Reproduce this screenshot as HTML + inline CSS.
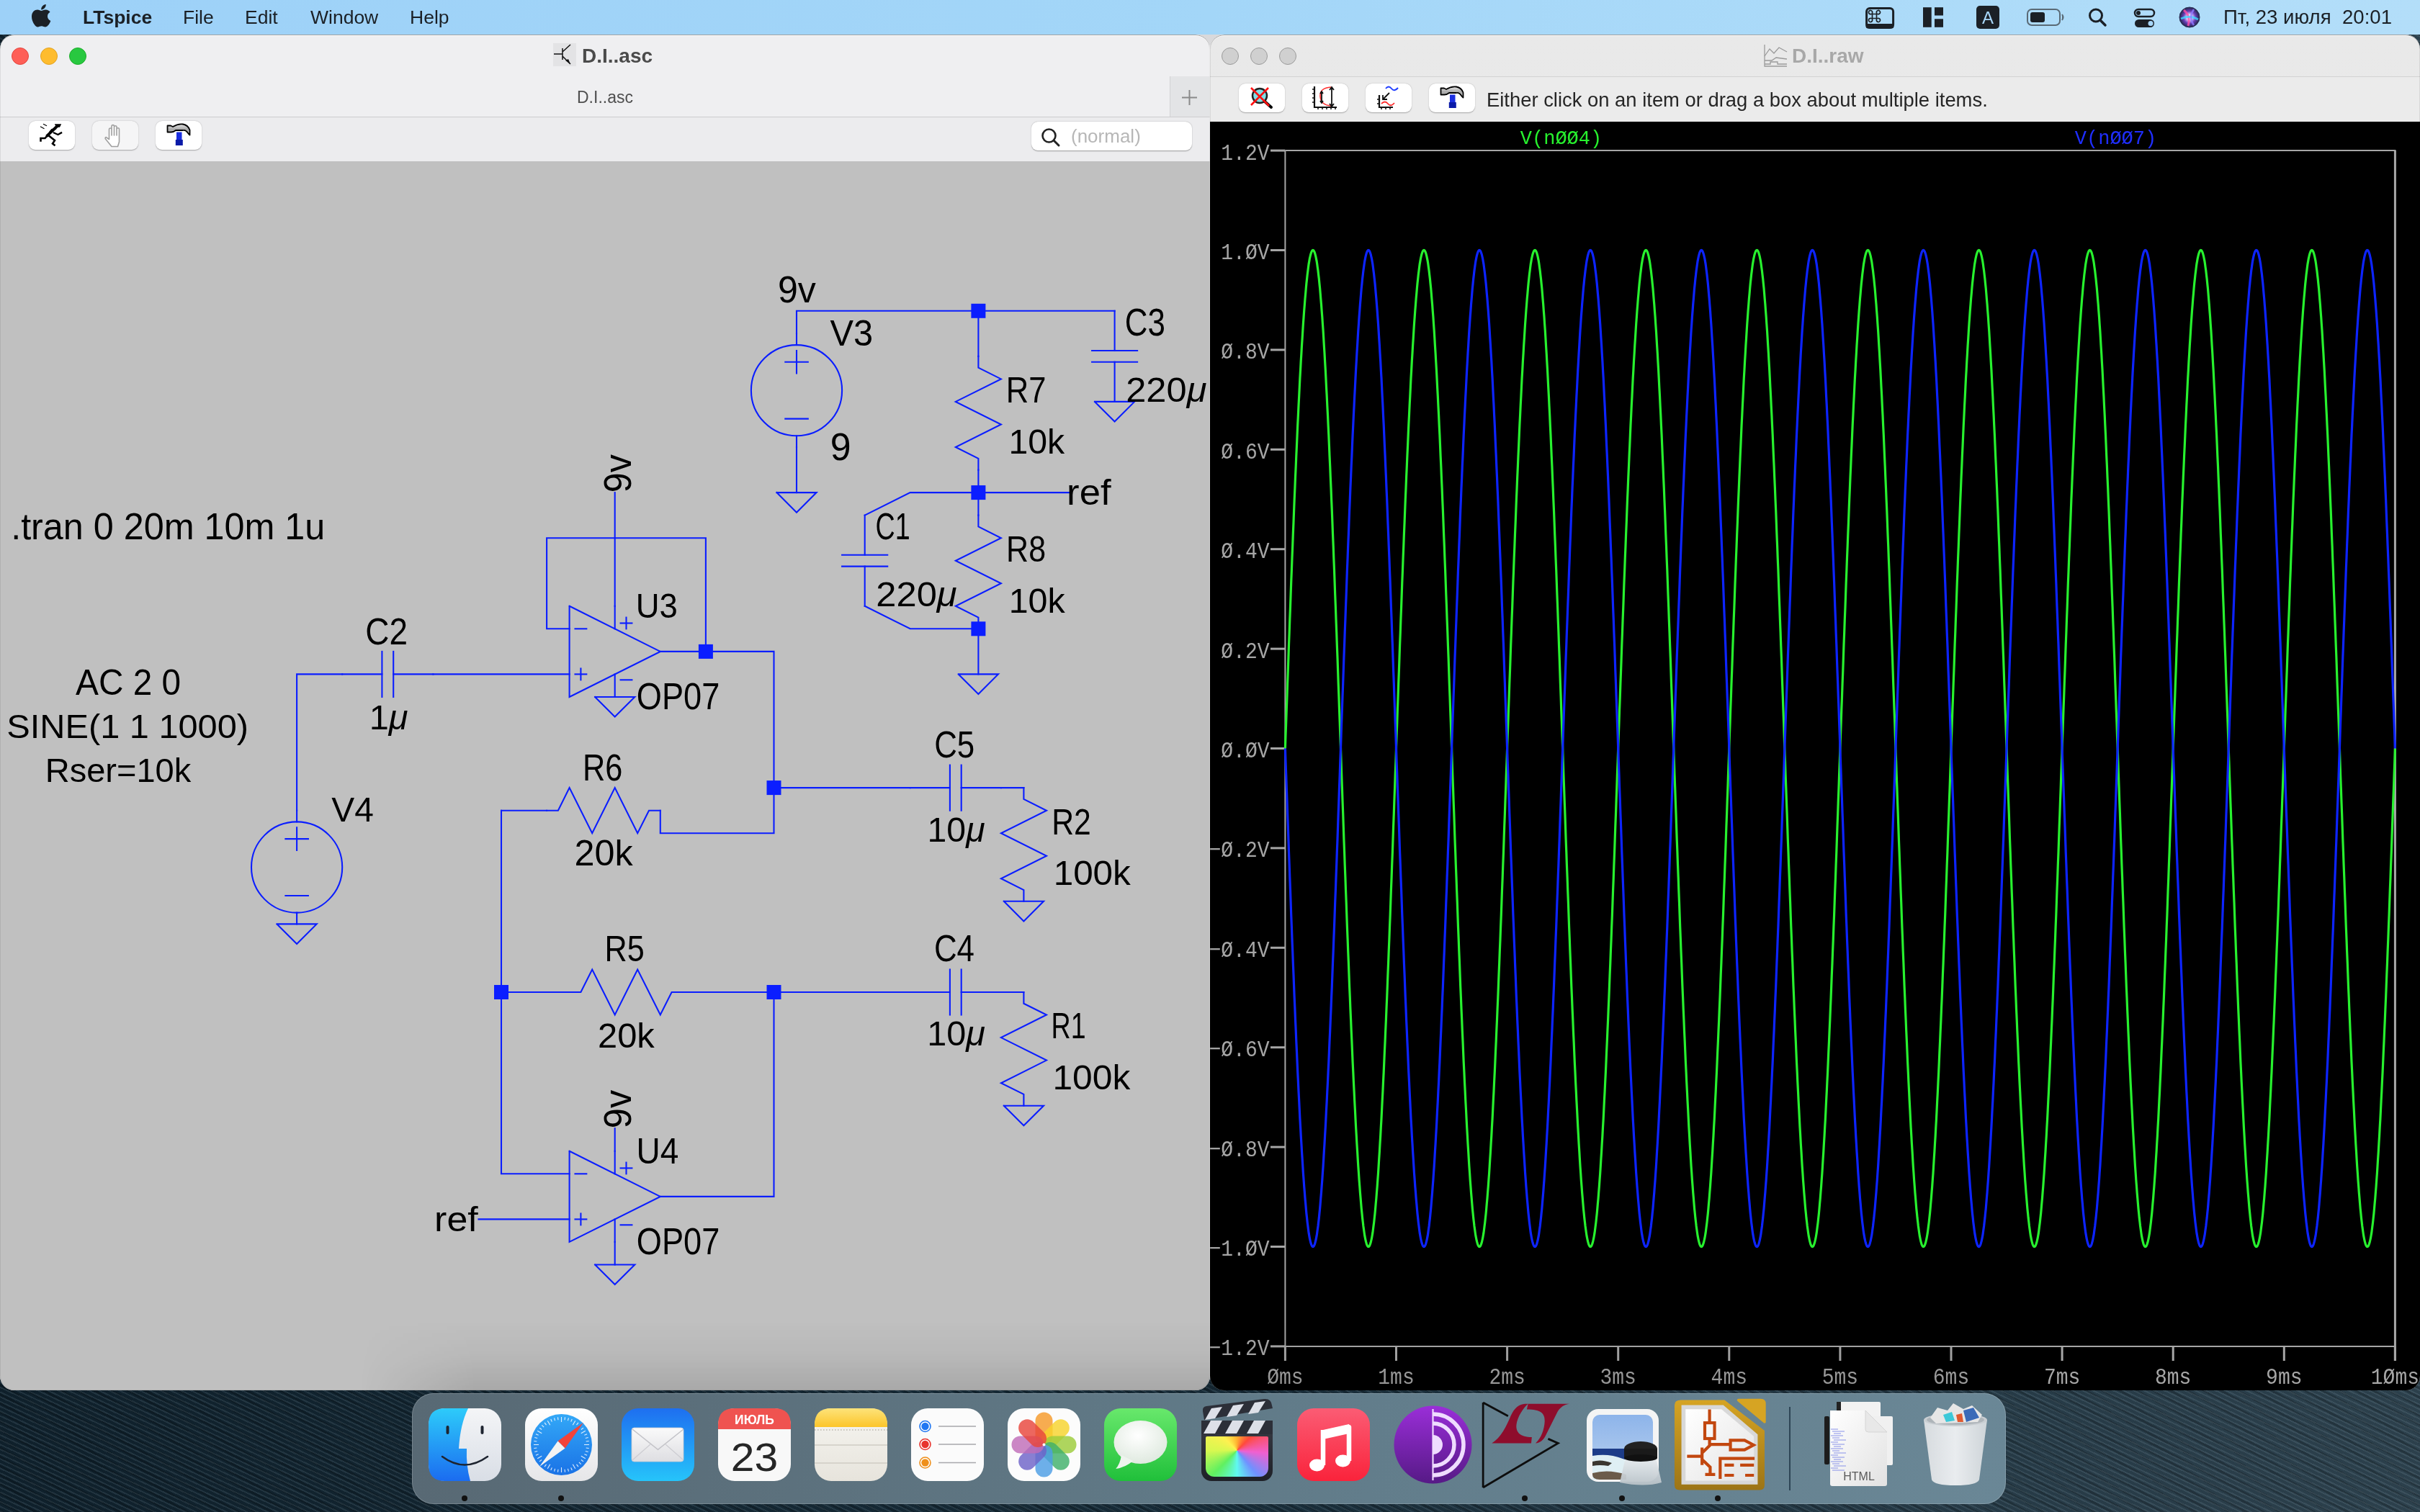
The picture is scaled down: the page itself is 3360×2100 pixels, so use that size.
<!DOCTYPE html>
<html><head><meta charset="utf-8"><style>
html,body{margin:0;padding:0;width:3360px;height:2100px;overflow:hidden;font-family:"Liberation Sans",sans-serif}
svg,#menubar,#lwin,#rwin{will-change:transform}
body{position:relative;background:#102330}
#desk{position:absolute;left:0;top:0;width:3360px;height:2100px;background:repeating-linear-gradient(25deg,rgba(190,220,235,0.1) 0 2px,rgba(0,0,0,0) 2px 6px),repeating-linear-gradient(28deg,rgba(0,0,0,0.18) 0 3px,rgba(0,0,0,0) 3px 11px),linear-gradient(90deg,#0f202b 0%,#172b37 50%,#273b47 85%,#2c404c 100%)}
#menubar{position:absolute;left:0;top:0;width:3360px;height:48px;background:linear-gradient(90deg,#9dd1f8 0%,#a3d6f8 50%,#b3def9 100%)}
#menubar span{position:absolute;top:9px;font-size:26.5px;color:#1b2026;white-space:nowrap}
#lwin{position:absolute;left:0;top:48px;width:1680px;height:1883px;background:#efeff1;border-radius:20px;overflow:hidden}
#lwin::after,#rwin::after{content:'';position:absolute;left:0;top:0;right:0;bottom:0;border-radius:20px;box-shadow:inset 0 1px 0 rgba(0,0,0,0.3),inset 0 0 0 1px rgba(0,0,0,0.08),inset 0 2px 0 rgba(255,255,255,0.7);pointer-events:none}
#rwin{position:absolute;left:1680px;top:48px;width:1680px;height:1883px;background:linear-gradient(#e9e9e9,#e4e4e4);border-radius:20px;overflow:hidden}
.tl{position:absolute;top:18px;width:22px;height:22px;border-radius:50%;border:1px solid}
.tbtn{position:absolute;border-radius:9px;box-shadow:0 0.5px 1.5px rgba(0,0,0,0.3);overflow:hidden}
.tbtn svg{display:block}
#canvas{position:absolute;left:0;top:176px;width:1680px;height:1707px;background:#c0c0c0}
#plotbg{position:absolute;left:0;top:121px;width:1680px;height:1762px;background:#000}
#dock{position:absolute;left:572px;top:1935px;width:2213px;height:154px;border-radius:30px;background:linear-gradient(90deg,#586974,#627d8b 60%,#6a8796);box-shadow:inset 0 0 0 1px rgba(255,255,255,0.18)}
.di{position:absolute;top:21px;width:101px;height:101px}
.dot{position:absolute;top:142px;width:8px;height:8px;border-radius:50%;background:#111}
</style></head><body>
<div id="desk"></div><div style="position:absolute;left:1600px;top:48px;width:160px;height:80px;background:#d9d9db"></div>

<div id="menubar">
  <svg style="position:absolute;left:0;top:0" width="3360" height="48">
    <g fill="#1b2026" transform="translate(43.7 3.8) scale(0.07)"><path d="M318.7 268.7c-.2-36.7 16.4-64.4 50-84.8-18.8-26.9-47.2-41.7-84.7-44.6-35.5-2.8-74.3 20.7-88.5 20.7-15 0-49.4-19.7-76.4-19.7C63.3 141.2 4 184.8 4 273.5q0 39.3 14.4 81.2c12.8 36.7 59 126.7 107.2 125.2 25.2-.6 43-17.9 75.8-17.9 31.8 0 48.3 17.9 76.4 17.9 48.6-.7 90.4-82.5 102.6-119.3-65.2-30.7-61.7-90-61.7-91.900zm-56.6-164.2c27.3-32.4 24.8-61.9 24-72.5-24.1 1.4-52 16.4-67.9 34.9-17.5 19.8-27.8 44.3-25.6 71.9 26.1 2 49.9-11.4 69.5-34.3z"/></g>
  </svg>
  <span style="left:115px;font-weight:bold">LTspice</span>
  <span style="left:254px">File</span>
  <span style="left:340px">Edit</span>
  <span style="left:431px">Window</span>
  <span style="left:569px">Help</span>
  <svg style="position:absolute;left:2580;top:0;left:2580px" width="780" height="48">
    <!-- cmd keyboard -->
    <rect x="11.6" y="11.6" width="37" height="27" rx="4.5" fill="none" stroke="#1b2026" stroke-width="3"/>
    <rect x="10.5" y="33" width="39" height="6.5" rx="3" fill="#1b2026"/>
    <g fill="none" stroke="#1b2026" stroke-width="1.7"><path d="M19.5 19.5 H25.5 V25.5 H19.5 Z M19.5 19.5 V18 A2.6 2.6 0 1 0 18 19.5 H19.5 M25.5 19.5 V18 A2.6 2.6 0 1 1 27 19.5 H25.5 M19.5 25.5 V27 A2.6 2.6 0 1 1 18 25.5 H19.5 M25.5 25.5 V27 A2.6 2.6 0 1 0 27 25.5 H25.5"/></g>
    <!-- grid -->
    <rect x="90" y="10.2" width="11.7" height="27.6" fill="#1b2026"/>
    <rect x="106" y="10.2" width="12" height="11.3" fill="#1b2026"/>
    <rect x="106" y="26.3" width="12" height="11.5" fill="#1b2026"/>
    <!-- A -->
    <rect x="164" y="8" width="32" height="32" rx="5" fill="#1b2026"/>
    <text x="180" y="33" text-anchor="middle" font-family="Liberation Sans" font-size="24" fill="#a7d6f8">A</text>
    <!-- battery -->
    <rect x="235" y="13" width="45" height="22" rx="6" fill="none" stroke="#5a6a76" stroke-width="2"/>
    <rect x="239" y="17" width="20" height="14" rx="3" fill="#1b2026"/>
    <path d="M283 20 q3 4 0 8" fill="#5a6a76" stroke="#5a6a76" stroke-width="2"/>
    <!-- search -->
    <circle cx="330" cy="21.5" r="8.5" fill="none" stroke="#1b2026" stroke-width="3"/>
    <path d="M336 28 L343 35" stroke="#1b2026" stroke-width="3.5" stroke-linecap="round"/>
    <!-- control center -->
    <rect x="384" y="13" width="27" height="10" rx="5" fill="none" stroke="#1b2026" stroke-width="2.5"/>
    <circle cx="389" cy="18" r="3" fill="#1b2026"/>
    <rect x="384" y="27" width="27" height="11" rx="5.5" fill="#1b2026"/>
    <circle cx="406" cy="32.5" r="3.5" fill="#a7d6f8"/>
    <!-- siri -->
    <defs><radialGradient id="siri" cx="50%" cy="50%" r="50%"><stop offset="0" stop-color="#ffffff"/><stop offset="0.25" stop-color="#e9d9ff"/><stop offset="0.6" stop-color="#6a3fb8"/><stop offset="1" stop-color="#20264a"/></radialGradient></defs>
    <circle cx="460" cy="24" r="14" fill="url(#siri)"/>
    <path d="M452 14 Q462 22 458 36" stroke="#ff4fa8" stroke-width="3" fill="none" opacity="0.8"/><path d="M448 26 Q460 20 472 27" stroke="#3fd8ff" stroke-width="3" fill="none" opacity="0.8"/><path d="M466 13 Q458 24 466 35" stroke="#8f7bff" stroke-width="2.5" fill="none" opacity="0.8"/>
    <circle cx="460" cy="24" r="14" fill="none" stroke="#2a2f55" stroke-width="1"/>
  </svg>
  <span style="left:3087px;font-size:27.6px;top:8px">&#1055;&#1090;, 23 &#1080;&#1102;&#1083;&#1103;&nbsp; 20:01</span>
</div>

<div id="lwin">
  <div class="tl" style="left:16px;background:#fe5f57;border-color:#e2463f"></div>
  <div class="tl" style="left:56px;background:#febc2e;border-color:#e1a223"></div>
  <div class="tl" style="left:96px;background:#28c840;border-color:#1dad2b"></div>
  <div style="position:absolute;left:768px;top:12px;width:32px;height:32px;background:#e3e3e5"></div>
  <svg style="position:absolute;left:768px;top:12px" width="32" height="32"><path d="M1 15 H13 M13 7 V23 M13 12 L24 2 M13 18 L24 29" stroke="#111" stroke-width="1.5" fill="none"/><path d="M24 29 L17 24 L21 22 Z" fill="#111"/></svg>
  <div style="position:absolute;left:808px;top:14px;font:bold 28px 'Liberation Sans', sans-serif;color:#4b4b4b">D.I..asc</div>
  <div style="position:absolute;left:801px;top:74px;font:23px 'Liberation Sans', sans-serif;color:#4f4f4f">D.I..asc</div>
  <div style="position:absolute;left:1624px;top:58px;width:56px;height:56px;background:#e3e4e6;border-left:1px solid #d2d2d4"></div>
  <svg style="position:absolute;left:1624px;top:58px" width="56" height="56"><path d="M17 29.5 H38 M27.5 19 V40" stroke="#8a8a8a" stroke-width="2"/></svg>
  <div style="position:absolute;left:0;top:114px;width:1680px;height:1px;background:#cdcdcf"></div>
  <div style="position:absolute;left:0;top:115px;width:1680px;height:61px;background:#ececee"></div>
  <div class="tbtn" style="left:40px;top:120px;width:64px;height:40px;background:#ffffff"><svg width="64" height="40" viewBox="0 0 64 40"><g fill="none" stroke="#000" stroke-linecap="square" stroke-linejoin="miter">
<path d="M37 5 H44 L42.5 8 H38.5 Z" fill="#000" stroke-width="1.5"/>
<path d="M38.5 8 L26 20" stroke-width="4"/>
<path d="M37 11 L32 12 L29.5 15" stroke-width="2.2"/>
<path d="M35 16.5 L40.5 19 L45 16.5" stroke-width="2.4"/>
<path d="M26 20 L22.5 24 H16.5 V27.5" stroke-width="2.6"/>
<path d="M28.5 21 L36 27 L33 31.5 L35.5 33.5" stroke-width="2.6"/>
<path d="M16.5 8 L21 10.5 M20.5 4.5 L24.5 6.5" stroke-width="1.2"/>
</g></svg></div><div class="tbtn" style="left:128px;top:120px;width:64px;height:40px;background:#f5f5f6"><svg width="64" height="40" viewBox="0 0 64 40"><path d="M27 35.5 L18.5 25 Q17.5 23.3 19.3 22.6 L23.5 25.5 V12 Q23.5 10 25.3 10 Q27 10 27 12 V20 V7.5 Q27 5.6 28.8 5.6 Q30.5 5.6 30.5 7.5 V20 V8.5 Q30.5 6.7 32.3 6.7 Q34 6.7 34 8.5 V20 V11.5 Q34 9.8 35.8 9.8 Q37.5 9.8 37.5 11.5 V29 L35.5 35.5 Z" fill="#fff" stroke="#a0a0a0" stroke-width="1.6" stroke-linejoin="round"/></svg></div><div class="tbtn" style="left:216px;top:120px;width:64px;height:40px;background:#ffffff"><svg width="64" height="40" viewBox="0 0 64 40"><defs><linearGradient id="hmh" x1="0" y1="0" x2="0" y2="1"><stop offset="0" stop-color="#e6e6e6"/><stop offset="0.5" stop-color="#a8a8a8"/><stop offset="1" stop-color="#d0d0d0"/></linearGradient></defs>
<path d="M16.5 6.5 H21 L24 8 Q31 3.5 38 4.5 Q45 5.8 47.5 12.5 V19.5 L45.5 17.5 Q42 12 38 13 H28 Q25 15.5 21.5 15.5 H16.5 Z" fill="url(#hmh)" stroke="#000" stroke-width="1.8" stroke-linejoin="round"/>
<rect x="29" y="15.5" width="7.5" height="11" fill="#1b2fe0"/><rect x="27.8" y="26" width="10" height="8" fill="#0a1aa8"/></svg></div>
  <div style="position:absolute;left:1432px;top:121px;width:223px;height:40px;background:#fff;border-radius:9px;box-shadow:0 0.5px 1.5px rgba(0,0,0,0.35)"></div>
  <svg style="position:absolute;left:1440px;top:126px" width="40" height="32"><circle cx="16.5" cy="14.5" r="9" fill="none" stroke="#222" stroke-width="2.6"/><path d="M23 21 L30 28" stroke="#222" stroke-width="3" stroke-linecap="round"/></svg>
  <div style="position:absolute;left:1487px;top:126px;font:26px 'Liberation Sans', sans-serif;color:#b7b7b7">(normal)</div>
  <div style="position:absolute;right:0;top:0;bottom:0;width:1px;background:rgba(255,255,255,0.4);z-index:5"></div>
  <div id="canvas">
    <svg width="1680" height="1707" style="position:absolute;left:0;top:0">
      <g transform="translate(0,-224)">
      <g fill="none" stroke="#0b1eff" stroke-width="2.1" stroke-linejoin="miter" stroke-linecap="square">
<path d="M1090.3 502.7 L1121.8 502.7"/>
<path d="M1106 487 L1106 518.5"/>
<path d="M1090.3 581.6 L1121.8 581.6"/>
<path d="M1106 463.3 L1106 479.1"/>
<path d="M1106 605.3 L1106 621"/>
<path d="M1106 463.3 L1106 431.8 L1547.6 431.8"/>
<path d="M1358.4 431.8 L1358.4 494.9"/>
<path d="M1358.4 494.9 L1358.4 510.6 L1389.9 526.4 L1326.8 557.9 L1389.9 589.5 L1326.8 621 L1358.4 636.8 L1358.4 652.6"/>
<path d="M1358.4 652.6 L1358.4 715.6"/>
<path d="M1358.4 684.1 L1484.5 684.1"/>
<path d="M1358.4 715.6 L1358.4 731.4 L1389.9 747.2 L1326.8 778.7 L1389.9 810.3 L1326.8 841.8 L1358.4 857.6 L1358.4 873.3"/>
<path d="M1358.4 873.3 L1358.4 936.4"/>
<path d="M1330.8 936.4 L1386 936.4 L1358.4 964 L1330.8 936.4"/>
<path d="M1547.6 431.8 L1547.6 487"/>
<path d="M1547.6 502.7 L1547.6 557.9"/>
<path d="M1516.1 487 L1579.1 487"/>
<path d="M1516.1 502.7 L1579.1 502.7"/>
<path d="M1520 557.9 L1575.2 557.9 L1547.6 585.5 L1520 557.9"/>
<path d="M1106 621 L1106 684.1"/>
<path d="M1078.4 684.1 L1133.6 684.1 L1106 711.7 L1078.4 684.1"/>
<path d="M1200.7 715.6 L1200.7 770.8"/>
<path d="M1200.7 786.6 L1200.7 841.8"/>
<path d="M1169.1 770.8 L1232.2 770.8"/>
<path d="M1169.1 786.6 L1232.2 786.6"/>
<path d="M1200.7 715.6 L1263.7 684.1 L1358.4 684.1"/>
<path d="M1200.7 841.8 L1263.7 873.3 L1358.4 873.3"/>
<path d="M790.6 841.8 L916.8 904.9 L790.6 968 L790.6 841.8"/>
<path d="M798.5 873.3 L814.3 873.3"/>
<path d="M798.5 936.4 L814.3 936.4"/>
<path d="M806.4 928.5 L806.4 944.3"/>
<path d="M853.7 841.8 L853.7 873.3"/>
<path d="M853.7 968 L853.7 936.4"/>
<path d="M861.6 865.5 L877.4 865.5"/>
<path d="M869.5 857.6 L869.5 873.3"/>
<path d="M861.6 944.3 L877.4 944.3"/>
<path d="M853.7 684.1 L853.7 841.8"/>
<path d="M790.6 873.3 L759.1 873.3 L759.1 747.2 L979.9 747.2 L979.9 904.9"/>
<path d="M916.8 904.9 L1074.5 904.9 L1074.5 1094.1"/>
<path d="M826.1 968 L881.3 968 L853.7 995.6 L826.1 968"/>
<path d="M396.4 1165.1 L427.9 1165.1"/>
<path d="M412.1 1149.3 L412.1 1180.9"/>
<path d="M396.4 1244 L427.9 1244"/>
<path d="M412.1 1125.7 L412.1 1141.4"/>
<path d="M412.1 1267.6 L412.1 1283.4"/>
<path d="M384.5 1283.4 L439.7 1283.4 L412.1 1311 L384.5 1283.4"/>
<path d="M412.1 1125.7 L412.1 936.4 L475.2 936.4"/>
<path d="M601.4 936.4 L546.2 936.4"/>
<path d="M530.4 936.4 L475.2 936.4"/>
<path d="M546.2 904.9 L546.2 968"/>
<path d="M530.4 904.9 L530.4 968"/>
<path d="M601.4 936.4 L790.6 936.4"/>
<path d="M759.1 1125.7 L774.9 1125.7 L790.6 1094.1 L822.2 1157.2 L853.7 1094.1 L885.2 1157.2 L901 1125.7 L916.8 1125.7"/>
<path d="M696 1125.7 L759.1 1125.7"/>
<path d="M916.8 1125.7 L916.8 1157.2 L1074.5 1157.2 L1074.5 1094.1"/>
<path d="M1074.5 1094.1 L1263.7 1094.1"/>
<path d="M1389.9 1094.1 L1334.7 1094.1"/>
<path d="M1318.9 1094.1 L1263.7 1094.1"/>
<path d="M1334.7 1062.6 L1334.7 1125.7"/>
<path d="M1318.9 1062.6 L1318.9 1125.7"/>
<path d="M1389.9 1094.1 L1421.4 1094.1"/>
<path d="M1421.4 1094.1 L1421.4 1109.9 L1453 1125.7 L1389.9 1157.2 L1453 1188.8 L1389.9 1220.3 L1421.4 1236.1 L1421.4 1251.8"/>
<path d="M1393.8 1251.8 L1449 1251.8 L1421.4 1279.4 L1393.8 1251.8"/>
<path d="M696 1125.7 L696 1630.3 L790.6 1630.3"/>
<path d="M790.6 1378 L806.4 1378 L822.2 1346.5 L853.7 1409.5 L885.2 1346.5 L916.8 1409.5 L932.6 1378 L948.3 1378"/>
<path d="M696 1378 L790.6 1378"/>
<path d="M948.3 1378 L1074.5 1378"/>
<path d="M1074.5 1378 L1263.7 1378"/>
<path d="M1389.9 1378 L1334.7 1378"/>
<path d="M1318.9 1378 L1263.7 1378"/>
<path d="M1334.7 1346.5 L1334.7 1409.5"/>
<path d="M1318.9 1346.5 L1318.9 1409.5"/>
<path d="M1389.9 1378 L1421.4 1378"/>
<path d="M1421.4 1378 L1421.4 1393.8 L1453 1409.5 L1389.9 1441.1 L1453 1472.6 L1389.9 1504.2 L1421.4 1519.9 L1421.4 1535.7"/>
<path d="M1393.8 1535.7 L1449 1535.7 L1421.4 1563.3 L1393.8 1535.7"/>
<path d="M1074.5 1378 L1074.5 1661.9 L916.8 1661.9"/>
<path d="M790.6 1598.8 L916.8 1661.9 L790.6 1724.9 L790.6 1598.8"/>
<path d="M798.5 1630.3 L814.3 1630.3"/>
<path d="M798.5 1693.4 L814.3 1693.4"/>
<path d="M806.4 1685.5 L806.4 1701.3"/>
<path d="M853.7 1598.8 L853.7 1630.3"/>
<path d="M853.7 1724.9 L853.7 1693.4"/>
<path d="M861.6 1622.4 L877.4 1622.4"/>
<path d="M869.5 1614.6 L869.5 1630.3"/>
<path d="M861.6 1701.3 L877.4 1701.3"/>
<path d="M853.7 1567.2 L853.7 1598.8"/>
<path d="M853.7 1724.9 L853.7 1756.5"/>
<path d="M826.1 1756.5 L881.3 1756.5 L853.7 1784.1 L826.1 1756.5"/>
<path d="M664.5 1693.4 L790.6 1693.4"/>
<circle cx="1106" cy="542.2" r="63.1"/>
<circle cx="412.1" cy="1204.5" r="63.1"/>
</g><g fill="#0b1eff">
<rect x="1348.4" y="421.8" width="20" height="20"/>
<rect x="1348.4" y="674.1" width="20" height="20"/>
<rect x="1348.4" y="863.3" width="20" height="20"/>
<rect x="969.9" y="894.9" width="20" height="20"/>
<rect x="1064.5" y="1084.1" width="20" height="20"/>
<rect x="686" y="1368" width="20" height="20"/>
<rect x="1064.5" y="1368" width="20" height="20"/>
</g>
      <g font-family="Liberation Sans, sans-serif" font-size="49" fill="#000">
      <g transform="matrix(0.99474 0 0 1.03030 5.37 -14.45)"><text x="1153.3" y="480.2" text-anchor="start">V3</text></g>
<g transform="matrix(1.05909 0 0 1.08485 -68.61 -53.13)"><text x="1153.3" y="637.9" text-anchor="start">9</text></g>
<g transform="matrix(1.02245 0 0 1.04242 -25.41 -17.92)"><text x="1107" y="419.8" text-anchor="middle">9v</text></g>
<g transform="matrix(0.88929 0 0 1.02424 153.72 -13.15)"><text x="1397.8" y="559" text-anchor="start">R7</text></g>
<g transform="matrix(0.98400 0 0 0.98571 25.02 8.80)"><text x="1397.8" y="630" text-anchor="start">10k</text></g>
<g transform="matrix(0.87679 0 0 1.03636 171.55 -27.76)"><text x="1397.8" y="779.8" text-anchor="start">R8</text></g>
<g transform="matrix(0.98800 0 0 0.97714 19.61 19.55)"><text x="1397.8" y="850.8" text-anchor="start">10k</text></g>
<g transform="matrix(0.89655 0 0 1.09091 160.10 -40.68)"><text x="1563.4" y="464.4" text-anchor="start">C3</text></g>
<g transform="matrix(1.03333 0 0 0.99524 -52.30 1.40)"><text x="1563.4" y="559" text-anchor="start">220<tspan font-style="italic">μ</tspan></text></g>
<g transform="matrix(0.76897 0 0 1.06667 280.23 -48.97)"><text x="1216.4" y="748.3" text-anchor="start">C1</text></g>
<g transform="matrix(1.03429 0 0 0.99762 -41.79 0.83)"><text x="1216.4" y="842.9" text-anchor="start">220<tspan font-style="italic">μ</tspan></text></g>
<g transform="matrix(1.07407 0 0 1.02000 -113.32 -13.72)"><text x="1484.5" y="701" text-anchor="start">ref</text></g>
<g transform="matrix(0.92807 0 0 0.98485 61.15 12.02)"><text x="885.2" y="858.7" text-anchor="start">U3</text></g>
<g transform="matrix(0.92167 0 0 1.03939 67.96 -38.60)"><text x="885.2" y="984.8" text-anchor="start">OP07</text></g>
<g transform="matrix(0.93860 0 0 1.03636 52.69 -58.36)"><text x="885.2" y="1615.6" text-anchor="start">U4</text></g>
<g transform="matrix(0.92167 0 0 1.03939 67.96 -68.42)"><text x="885.2" y="1741.8" text-anchor="start">OP07</text></g>
<g transform="matrix(1.06111 0 0 0.97714 -41.34 38.69)"><text x="664.5" y="1710.3" text-anchor="end">ref</text></g>
<g transform="matrix(0.87143 0 0 1.03333 187.06 -38.20)"><text x="1460.9" y="1158.3" text-anchor="start">R2</text></g>
<g transform="matrix(1.00882 0 0 0.97429 -11.13 31.60)"><text x="1460.9" y="1229.3" text-anchor="start">100k</text></g>
<g transform="matrix(0.76786 0 0 1.02121 337.79 -30.39)"><text x="1460.9" y="1442.2" text-anchor="start">R1</text></g>
<g transform="matrix(1.01471 0 0 0.97429 -20.94 38.91)"><text x="1460.9" y="1513.1" text-anchor="start">100k</text></g>
<g transform="matrix(0.97759 0 0 0.96970 11.11 33.14)"><text x="459.4" y="1142.5" text-anchor="start">V4</text></g>
<g transform="matrix(0.93684 0 0 1.06667 32.31 -58.90)"><text x="538.3" y="894.1" text-anchor="middle">C2</text></g>
<g transform="matrix(0.99388 0 0 0.98810 4.55 12.15)"><text x="538.3" y="1012.4" text-anchor="middle">1<tspan font-style="italic">μ</tspan></text></g>
<g transform="matrix(0.89483 0 0 1.06061 137.91 -63.66)"><text x="1326.8" y="1051.8" text-anchor="middle">C5</text></g>
<g transform="matrix(0.98312 0 0 0.98333 23.18 18.15)"><text x="1326.8" y="1170.1" text-anchor="middle">10<tspan font-style="italic">μ</tspan></text></g>
<g transform="matrix(0.89492 0 0 1.03939 137.60 -52.83)"><text x="1326.8" y="1335.7" text-anchor="middle">C4</text></g>
<g transform="matrix(0.99221 0 0 0.97619 11.15 33.13)"><text x="1326.8" y="1454" text-anchor="middle">10<tspan font-style="italic">μ</tspan></text></g>
<g transform="matrix(0.88393 0 0 1.06364 95.93 -68.32)"><text x="837.9" y="1083.4" text-anchor="middle">R6</text></g>
<g transform="matrix(1.02763 0 0 1.02000 -23.03 -23.44)"><text x="837.9" y="1201.7" text-anchor="middle">20k</text></g>
<g transform="matrix(0.88070 0 0 1.02121 101.35 -28.64)"><text x="869.5" y="1335.7" text-anchor="middle">R5</text></g>
<g transform="matrix(0.99740 0 0 0.99143 2.16 13.16)"><text x="869.5" y="1454" text-anchor="middle">20k</text></g>
<g transform="matrix(1.08182 0 0 1.02449 -71.57 -14.65)"><text x="853.7" y="704.4" transform="rotate(-90 853.7 682.1)">9v</text></g>
<g transform="matrix(1.10606 0 0 1.03061 -92.41 -45.95)"><text x="853.7" y="1587.5" transform="rotate(-90 853.7 1565.2)">9v</text></g>
<g transform="matrix(0.97568 0 0 1.02121 5.38 -20.99)"><text x="177" y="965.5" text-anchor="middle">AC 2 0</text></g>
<g transform="matrix(0.99458 0 0 0.93111 1.06 69.27)"><text x="177" y="1026.3" text-anchor="middle">SINE(1 1 1000)</text></g>
<g transform="matrix(0.96019 0 0 0.93429 4.59 70.93)"><text x="166" y="1086.5" text-anchor="middle">Rser=10k</text></g>
<g transform="matrix(1.02662 0 0 1.05152 -0.73 -38.13)"><text x="15.5" y="748.4">.tran 0 20m 10m 1u</text></g>
      </g>
      </g>
    </svg>
  </div>
</div>

<div id="rwin">
  <div class="tl" style="left:16px;background:#d0d0d0;border-color:#9a9a9a"></div>
  <div class="tl" style="left:56px;background:#d0d0d0;border-color:#9a9a9a"></div>
  <div class="tl" style="left:96px;background:#d0d0d0;border-color:#9a9a9a"></div>
  <svg style="position:absolute;left:768px;top:12px" width="34" height="34"><g stroke="#9a9a9a" stroke-width="1.3" fill="none"><path d="M2 2 V32 H33"/><path d="M2 18 L9 8 L15 14 L22 6 L33 12"/><path d="M2 24 H12 L18 20 L33 22"/><path d="M2 29 H10 V26 H20 V29 H33"/></g></svg>
  <div style="position:absolute;left:808px;top:14px;font:bold 28px 'Liberation Sans', sans-serif;color:#a8a8a8">D.I..raw</div>
  <div style="position:absolute;left:0;top:58px;width:1680px;height:1px;background:#d2d2d2"></div>
  <div style="position:absolute;left:0;top:59px;width:1680px;height:62px;background:#ebebeb"></div>
  <div class="tbtn" style="left:40px;top:68px;width:64px;height:40px;background:#ffffff"><svg width="64" height="40" viewBox="0 0 64 40"><circle cx="29" cy="17" r="10" fill="#7fe0e8" stroke="#222" stroke-width="2.5"/><path d="M36 25 L45 33" stroke="#000" stroke-width="4" stroke-linecap="round"/><path d="M17 6 L42 31 M41 6 L17 30" stroke="#ff1010" stroke-width="2.6"/></svg></div><div class="tbtn" style="left:128px;top:68px;width:64px;height:40px;background:#ffffff"><svg width="64" height="40" viewBox="0 0 64 40"><path d="M17 4 V33 H48" stroke="#111" stroke-width="2.2" fill="none"/><path d="M14 8h3M14 14h3M14 20h3M14 26h3M22 33v3M28 33v3M34 33v3M40 33v3M46 33v3" stroke="#111" stroke-width="1.5"/><path d="M40 5 Q24 6 25 18 Q26 30 40 31" stroke="#ff3030" stroke-width="1.6" fill="none"/><path d="M41 6 V31 M38 9 L41 5 L44 9 M38 28 L41 32 L44 28 M27 12 V26 M25 14 L27 11 L29 14 M25 24 L27 27 L29 24" stroke="#111" stroke-width="1.8" fill="none"/></svg></div><div class="tbtn" style="left:216px;top:68px;width:64px;height:40px;background:#ffffff"><svg width="64" height="40" viewBox="0 0 64 40"><path d="M19 16 V33 H38" stroke="#111" stroke-width="2.2" fill="none"/><path d="M22 33v3M28 33v3M34 33v3M16 22h3M16 28h3" stroke="#111" stroke-width="1.5"/><path d="M22 28 Q27 23 31 28 T40 27" stroke="#ff2a2a" stroke-width="1.8" fill="none"/><path d="M28 7 Q32 2 36 7 T45 6" stroke="#1e3cff" stroke-width="2" fill="none"/><path d="M33 13 L24 22 M24 16 V22 H30" stroke="#111" stroke-width="1.8" fill="none"/></svg></div><div class="tbtn" style="left:304px;top:68px;width:64px;height:40px;background:#ffffff"><svg width="64" height="40" viewBox="0 0 64 40"><defs><linearGradient id="hmh" x1="0" y1="0" x2="0" y2="1"><stop offset="0" stop-color="#e6e6e6"/><stop offset="0.5" stop-color="#a8a8a8"/><stop offset="1" stop-color="#d0d0d0"/></linearGradient></defs>
<path d="M16.5 6.5 H21 L24 8 Q31 3.5 38 4.5 Q45 5.8 47.5 12.5 V19.5 L45.5 17.5 Q42 12 38 13 H28 Q25 15.5 21.5 15.5 H16.5 Z" fill="url(#hmh)" stroke="#000" stroke-width="1.8" stroke-linejoin="round"/>
<rect x="29" y="15.5" width="7.5" height="11" fill="#1b2fe0"/><rect x="27.8" y="26" width="10" height="8" fill="#0a1aa8"/></svg></div>
  <div style="position:absolute;left:2064px;top:73px;font:27.4px 'Liberation Sans', sans-serif;color:#262626;left:384px;top:75px">Either click on an item or drag a box about multiple items.</div>
  <div id="plotbg"></div>
</div>
<svg style="position:absolute;left:0;top:0" width="3360" height="1931">
<g stroke="#a6a6a6" stroke-width="3" fill="none">
<path stroke-width="2" d="M1784.4 209 H3325.4 V1870 H1784.4 M1784.4 209 V1870"/>
<path d="M1784.4 1870 V1890 M3325.4 209 V1890"/>
<path d="M1764 209.1 H1784.4"/>
<path d="M1764 347.5 H1784.4"/>
<path d="M1764 485.9 H1784.4"/>
<path d="M1764 624.3 H1784.4"/>
<path d="M1764 762.7 H1784.4"/>
<path d="M1764 901.1 H1784.4"/>
<path d="M1764 1039.5 H1784.4"/>
<path d="M1764 1177.9 H1784.4"/>
<path d="M1764 1316.3 H1784.4"/>
<path d="M1764 1454.7 H1784.4"/>
<path d="M1764 1593.1 H1784.4"/>
<path d="M1764 1731.5 H1784.4"/>
<path d="M1764 1869.9 H1784.4"/>
<path d="M1938.5 1870 V1890"/>
<path d="M2092.6 1870 V1890"/>
<path d="M2246.7 1870 V1890"/>
<path d="M2400.8 1870 V1890"/>
<path d="M2554.9 1870 V1890"/>
<path d="M2709 1870 V1890"/>
<path d="M2863.1 1870 V1890"/>
<path d="M3017.2 1870 V1890"/>
<path d="M3171.3 1870 V1890"/>
<path d="M3325.4 1870 V1890"/>
</g>
<g font-family="Liberation Mono, monospace" font-size="28" fill="#a6a6a6">
<text transform="translate(1762.5 221.5) scale(1 1.14)" text-anchor="end">1.2V</text>
<text transform="translate(1762.5 359.9) scale(1 1.14)" text-anchor="end">1.ØV</text>
<text transform="translate(1762.5 498.3) scale(1 1.14)" text-anchor="end">Ø.8V</text>
<text transform="translate(1762.5 636.7) scale(1 1.14)" text-anchor="end">Ø.6V</text>
<text transform="translate(1762.5 775.1) scale(1 1.14)" text-anchor="end">Ø.4V</text>
<text transform="translate(1762.5 913.5) scale(1 1.14)" text-anchor="end">Ø.2V</text>
<text transform="translate(1762.5 1051.9) scale(1 1.14)" text-anchor="end">Ø.ØV</text>
<text transform="translate(1762.5 1190.3) scale(1 1.14)" text-anchor="end">−Ø.2V</text>
<text transform="translate(1762.5 1328.7) scale(1 1.14)" text-anchor="end">−Ø.4V</text>
<text transform="translate(1762.5 1467.1) scale(1 1.14)" text-anchor="end">−Ø.6V</text>
<text transform="translate(1762.5 1605.5) scale(1 1.14)" text-anchor="end">−Ø.8V</text>
<text transform="translate(1762.5 1743.9) scale(1 1.14)" text-anchor="end">−1.ØV</text>
<text transform="translate(1762.5 1882.3) scale(1 1.14)" text-anchor="end">−1.2V</text>
<text transform="translate(1784.4 1921.8) scale(1 1.14)" text-anchor="middle">Øms</text>
<text transform="translate(1938.5 1921.8) scale(1 1.14)" text-anchor="middle">1ms</text>
<text transform="translate(2092.6 1921.8) scale(1 1.14)" text-anchor="middle">2ms</text>
<text transform="translate(2246.7 1921.8) scale(1 1.14)" text-anchor="middle">3ms</text>
<text transform="translate(2400.8 1921.8) scale(1 1.14)" text-anchor="middle">4ms</text>
<text transform="translate(2554.9 1921.8) scale(1 1.14)" text-anchor="middle">5ms</text>
<text transform="translate(2709 1921.8) scale(1 1.14)" text-anchor="middle">6ms</text>
<text transform="translate(2863.1 1921.8) scale(1 1.14)" text-anchor="middle">7ms</text>
<text transform="translate(3017.2 1921.8) scale(1 1.14)" text-anchor="middle">8ms</text>
<text transform="translate(3171.3 1921.8) scale(1 1.14)" text-anchor="middle">9ms</text>
<text transform="translate(3325.4 1921.8) scale(1 1.14)" text-anchor="middle">1Øms</text>
</g>
<path d="M1784.4 1039.5 L1785 1021.4 L1785.7 1003.3 L1786.3 985.2 L1787 967.2 L1787.6 949.2 L1788.3 931.2 L1788.9 913.4 L1789.5 895.6 L1790.2 878 L1790.8 860.4 L1791.5 843 L1792.1 825.7 L1792.7 808.5 L1793.4 791.5 L1794 774.7 L1794.7 758 L1795.3 741.6 L1796 725.3 L1796.6 709.3 L1797.2 693.5 L1797.9 677.9 L1798.5 662.6 L1799.2 647.5 L1799.8 632.8 L1800.5 618.2 L1801.1 604 L1801.7 590.1 L1802.4 576.5 L1803 563.2 L1803.7 550.2 L1804.3 537.5 L1804.9 525.2 L1805.6 513.3 L1806.2 501.7 L1806.9 490.5 L1807.5 479.7 L1808.2 469.2 L1808.8 459.1 L1809.4 449.5 L1810.1 440.2 L1810.7 431.4 L1811.4 422.9 L1812 414.9 L1812.7 407.3 L1813.3 400.2 L1813.9 393.5 L1814.6 387.2 L1815.2 381.4 L1815.9 376 L1816.5 371.1 L1817.1 366.6 L1817.8 362.6 L1818.4 359.1 L1819.1 356 L1819.7 353.4 L1820.4 351.3 L1821 349.6 L1821.6 348.4 L1822.3 347.7 L1822.9 347.5 L1823.6 347.7 L1824.2 348.4 L1824.9 349.6 L1825.5 351.3 L1826.1 353.4 L1826.8 356 L1827.4 359.1 L1828.1 362.6 L1828.7 366.6 L1829.3 371.1 L1830 376 L1830.6 381.4 L1831.3 387.2 L1831.9 393.5 L1832.6 400.2 L1833.2 407.3 L1833.8 414.9 L1834.5 422.9 L1835.1 431.4 L1835.8 440.2 L1836.4 449.5 L1837.1 459.1 L1837.7 469.2 L1838.3 479.7 L1839 490.5 L1839.6 501.7 L1840.3 513.3 L1840.9 525.2 L1841.5 537.5 L1842.2 550.2 L1842.8 563.2 L1843.5 576.5 L1844.1 590.1 L1844.8 604 L1845.4 618.2 L1846 632.8 L1846.7 647.5 L1847.3 662.6 L1848 677.9 L1848.6 693.5 L1849.3 709.3 L1849.9 725.3 L1850.5 741.6 L1851.2 758 L1851.8 774.7 L1852.5 791.5 L1853.1 808.5 L1853.7 825.7 L1854.4 843 L1855 860.4 L1855.7 878 L1856.3 895.6 L1857 913.4 L1857.6 931.2 L1858.2 949.2 L1858.9 967.2 L1859.5 985.2 L1860.2 1003.3 L1860.8 1021.4 L1861.5 1039.5 L1862.1 1057.6 L1862.7 1075.7 L1863.4 1093.8 L1864 1111.8 L1864.7 1129.8 L1865.3 1147.8 L1865.9 1165.6 L1866.6 1183.4 L1867.2 1201 L1867.9 1218.6 L1868.5 1236 L1869.2 1253.3 L1869.8 1270.5 L1870.4 1287.5 L1871.1 1304.3 L1871.7 1321 L1872.4 1337.4 L1873 1353.7 L1873.6 1369.7 L1874.3 1385.5 L1874.9 1401.1 L1875.6 1416.4 L1876.2 1431.5 L1876.9 1446.2 L1877.5 1460.8 L1878.1 1475 L1878.8 1488.9 L1879.4 1502.5 L1880.1 1515.8 L1880.7 1528.8 L1881.4 1541.5 L1882 1553.8 L1882.6 1565.7 L1883.3 1577.3 L1883.9 1588.5 L1884.6 1599.3 L1885.2 1609.8 L1885.8 1619.9 L1886.5 1629.5 L1887.1 1638.8 L1887.8 1647.6 L1888.4 1656.1 L1889.1 1664.1 L1889.7 1671.7 L1890.3 1678.8 L1891 1685.5 L1891.6 1691.8 L1892.3 1697.6 L1892.9 1703 L1893.6 1707.9 L1894.2 1712.4 L1894.8 1716.4 L1895.5 1719.9 L1896.1 1723 L1896.8 1725.6 L1897.4 1727.7 L1898 1729.4 L1898.7 1730.6 L1899.3 1731.3 L1900 1731.5 L1900.6 1731.3 L1901.3 1730.6 L1901.9 1729.4 L1902.5 1727.7 L1903.2 1725.6 L1903.8 1723 L1904.5 1719.9 L1905.1 1716.4 L1905.8 1712.4 L1906.4 1707.9 L1907 1703 L1907.7 1697.6 L1908.3 1691.8 L1909 1685.5 L1909.6 1678.8 L1910.2 1671.7 L1910.9 1664.1 L1911.5 1656.1 L1912.2 1647.6 L1912.8 1638.8 L1913.5 1629.5 L1914.1 1619.9 L1914.7 1609.8 L1915.4 1599.3 L1916 1588.5 L1916.7 1577.3 L1917.3 1565.7 L1918 1553.8 L1918.6 1541.5 L1919.2 1528.8 L1919.9 1515.8 L1920.5 1502.5 L1921.2 1488.9 L1921.8 1475 L1922.4 1460.8 L1923.1 1446.2 L1923.7 1431.5 L1924.4 1416.4 L1925 1401.1 L1925.7 1385.5 L1926.3 1369.7 L1926.9 1353.7 L1927.6 1337.4 L1928.2 1321 L1928.9 1304.3 L1929.5 1287.5 L1930.2 1270.5 L1930.8 1253.3 L1931.4 1236 L1932.1 1218.6 L1932.7 1201 L1933.4 1183.4 L1934 1165.6 L1934.6 1147.8 L1935.3 1129.8 L1935.9 1111.8 L1936.6 1093.8 L1937.2 1075.7 L1937.9 1057.6 L1938.5 1039.5 L1939.1 1021.4 L1939.8 1003.3 L1940.4 985.2 L1941.1 967.2 L1941.7 949.2 L1942.4 931.2 L1943 913.4 L1943.6 895.6 L1944.3 878 L1944.9 860.4 L1945.6 843 L1946.2 825.7 L1946.8 808.5 L1947.5 791.5 L1948.1 774.7 L1948.8 758 L1949.4 741.6 L1950.1 725.3 L1950.7 709.3 L1951.3 693.5 L1952 677.9 L1952.6 662.6 L1953.3 647.5 L1953.9 632.8 L1954.6 618.2 L1955.2 604 L1955.8 590.1 L1956.5 576.5 L1957.1 563.2 L1957.8 550.2 L1958.4 537.5 L1959 525.2 L1959.7 513.3 L1960.3 501.7 L1961 490.5 L1961.6 479.7 L1962.3 469.2 L1962.9 459.1 L1963.5 449.5 L1964.2 440.2 L1964.8 431.4 L1965.5 422.9 L1966.1 414.9 L1966.8 407.3 L1967.4 400.2 L1968 393.5 L1968.7 387.2 L1969.3 381.4 L1970 376 L1970.6 371.1 L1971.2 366.6 L1971.9 362.6 L1972.5 359.1 L1973.2 356 L1973.8 353.4 L1974.5 351.3 L1975.1 349.6 L1975.7 348.4 L1976.4 347.7 L1977 347.5 L1977.7 347.7 L1978.3 348.4 L1979 349.6 L1979.6 351.3 L1980.2 353.4 L1980.9 356 L1981.5 359.1 L1982.2 362.6 L1982.8 366.6 L1983.4 371.1 L1984.1 376 L1984.7 381.4 L1985.4 387.2 L1986 393.5 L1986.7 400.2 L1987.3 407.3 L1987.9 414.9 L1988.6 422.9 L1989.2 431.4 L1989.9 440.2 L1990.5 449.5 L1991.2 459.1 L1991.8 469.2 L1992.4 479.7 L1993.1 490.5 L1993.7 501.7 L1994.4 513.3 L1995 525.2 L1995.6 537.5 L1996.3 550.2 L1996.9 563.2 L1997.6 576.5 L1998.2 590.1 L1998.9 604 L1999.5 618.2 L2000.1 632.8 L2000.8 647.5 L2001.4 662.6 L2002.1 677.9 L2002.7 693.5 L2003.4 709.3 L2004 725.3 L2004.6 741.6 L2005.3 758 L2005.9 774.7 L2006.6 791.5 L2007.2 808.5 L2007.8 825.7 L2008.5 843 L2009.1 860.4 L2009.8 878 L2010.4 895.6 L2011.1 913.4 L2011.7 931.2 L2012.3 949.2 L2013 967.2 L2013.6 985.2 L2014.3 1003.3 L2014.9 1021.4 L2015.6 1039.5 L2016.2 1057.6 L2016.8 1075.7 L2017.5 1093.8 L2018.1 1111.8 L2018.8 1129.8 L2019.4 1147.8 L2020 1165.6 L2020.7 1183.4 L2021.3 1201 L2022 1218.6 L2022.6 1236 L2023.3 1253.3 L2023.9 1270.5 L2024.5 1287.5 L2025.2 1304.3 L2025.8 1321 L2026.5 1337.4 L2027.1 1353.7 L2027.7 1369.7 L2028.4 1385.5 L2029 1401.1 L2029.7 1416.4 L2030.3 1431.5 L2031 1446.2 L2031.6 1460.8 L2032.2 1475 L2032.9 1488.9 L2033.5 1502.5 L2034.2 1515.8 L2034.8 1528.8 L2035.5 1541.5 L2036.1 1553.8 L2036.7 1565.7 L2037.4 1577.3 L2038 1588.5 L2038.7 1599.3 L2039.3 1609.8 L2039.9 1619.9 L2040.6 1629.5 L2041.2 1638.8 L2041.9 1647.6 L2042.5 1656.1 L2043.2 1664.1 L2043.8 1671.7 L2044.4 1678.8 L2045.1 1685.5 L2045.7 1691.8 L2046.4 1697.6 L2047 1703 L2047.7 1707.9 L2048.3 1712.4 L2048.9 1716.4 L2049.6 1719.9 L2050.2 1723 L2050.9 1725.6 L2051.5 1727.7 L2052.1 1729.4 L2052.8 1730.6 L2053.4 1731.3 L2054.1 1731.5 L2054.7 1731.3 L2055.4 1730.6 L2056 1729.4 L2056.6 1727.7 L2057.3 1725.6 L2057.9 1723 L2058.6 1719.9 L2059.2 1716.4 L2059.9 1712.4 L2060.5 1707.9 L2061.1 1703 L2061.8 1697.6 L2062.4 1691.8 L2063.1 1685.5 L2063.7 1678.8 L2064.3 1671.7 L2065 1664.1 L2065.6 1656.1 L2066.3 1647.6 L2066.9 1638.8 L2067.6 1629.5 L2068.2 1619.9 L2068.8 1609.8 L2069.5 1599.3 L2070.1 1588.5 L2070.8 1577.3 L2071.4 1565.7 L2072.1 1553.8 L2072.7 1541.5 L2073.3 1528.8 L2074 1515.8 L2074.6 1502.5 L2075.3 1488.9 L2075.9 1475 L2076.5 1460.8 L2077.2 1446.2 L2077.8 1431.5 L2078.5 1416.4 L2079.1 1401.1 L2079.8 1385.5 L2080.4 1369.7 L2081 1353.7 L2081.7 1337.4 L2082.3 1321 L2083 1304.3 L2083.6 1287.5 L2084.3 1270.5 L2084.9 1253.3 L2085.5 1236 L2086.2 1218.6 L2086.8 1201 L2087.5 1183.4 L2088.1 1165.6 L2088.7 1147.8 L2089.4 1129.8 L2090 1111.8 L2090.7 1093.8 L2091.3 1075.7 L2092 1057.6 L2092.6 1039.5 L2093.2 1021.4 L2093.9 1003.3 L2094.5 985.2 L2095.2 967.2 L2095.8 949.2 L2096.5 931.2 L2097.1 913.4 L2097.7 895.6 L2098.4 878 L2099 860.4 L2099.7 843 L2100.3 825.7 L2100.9 808.5 L2101.6 791.5 L2102.2 774.7 L2102.9 758 L2103.5 741.6 L2104.2 725.3 L2104.8 709.3 L2105.4 693.5 L2106.1 677.9 L2106.7 662.6 L2107.4 647.5 L2108 632.8 L2108.7 618.2 L2109.3 604 L2109.9 590.1 L2110.6 576.5 L2111.2 563.2 L2111.9 550.2 L2112.5 537.5 L2113.1 525.2 L2113.8 513.3 L2114.4 501.7 L2115.1 490.5 L2115.7 479.7 L2116.4 469.2 L2117 459.1 L2117.6 449.5 L2118.3 440.2 L2118.9 431.4 L2119.6 422.9 L2120.2 414.9 L2120.9 407.3 L2121.5 400.2 L2122.1 393.5 L2122.8 387.2 L2123.4 381.4 L2124.1 376 L2124.7 371.1 L2125.3 366.6 L2126 362.6 L2126.6 359.1 L2127.3 356 L2127.9 353.4 L2128.6 351.3 L2129.2 349.6 L2129.8 348.4 L2130.5 347.7 L2131.1 347.5 L2131.8 347.7 L2132.4 348.4 L2133.1 349.6 L2133.7 351.3 L2134.3 353.4 L2135 356 L2135.6 359.1 L2136.3 362.6 L2136.9 366.6 L2137.5 371.1 L2138.2 376 L2138.8 381.4 L2139.5 387.2 L2140.1 393.5 L2140.8 400.2 L2141.4 407.3 L2142 414.9 L2142.7 422.9 L2143.3 431.4 L2144 440.2 L2144.6 449.5 L2145.3 459.1 L2145.9 469.2 L2146.5 479.7 L2147.2 490.5 L2147.8 501.7 L2148.5 513.3 L2149.1 525.2 L2149.7 537.5 L2150.4 550.2 L2151 563.2 L2151.7 576.5 L2152.3 590.1 L2153 604 L2153.6 618.2 L2154.2 632.8 L2154.9 647.5 L2155.5 662.6 L2156.2 677.9 L2156.8 693.5 L2157.5 709.3 L2158.1 725.3 L2158.7 741.6 L2159.4 758 L2160 774.7 L2160.7 791.5 L2161.3 808.5 L2161.9 825.7 L2162.6 843 L2163.2 860.4 L2163.9 878 L2164.5 895.6 L2165.2 913.4 L2165.8 931.2 L2166.4 949.2 L2167.1 967.2 L2167.7 985.2 L2168.4 1003.3 L2169 1021.4 L2169.7 1039.5 L2170.3 1057.6 L2170.9 1075.7 L2171.6 1093.8 L2172.2 1111.8 L2172.9 1129.8 L2173.5 1147.8 L2174.1 1165.6 L2174.8 1183.4 L2175.4 1201 L2176.1 1218.6 L2176.7 1236 L2177.4 1253.3 L2178 1270.5 L2178.6 1287.5 L2179.3 1304.3 L2179.9 1321 L2180.6 1337.4 L2181.2 1353.7 L2181.8 1369.7 L2182.5 1385.5 L2183.1 1401.1 L2183.8 1416.4 L2184.4 1431.5 L2185.1 1446.2 L2185.7 1460.8 L2186.3 1475 L2187 1488.9 L2187.6 1502.5 L2188.3 1515.8 L2188.9 1528.8 L2189.6 1541.5 L2190.2 1553.8 L2190.8 1565.7 L2191.5 1577.3 L2192.1 1588.5 L2192.8 1599.3 L2193.4 1609.8 L2194 1619.9 L2194.7 1629.5 L2195.3 1638.8 L2196 1647.6 L2196.6 1656.1 L2197.3 1664.1 L2197.9 1671.7 L2198.5 1678.8 L2199.2 1685.5 L2199.8 1691.8 L2200.5 1697.6 L2201.1 1703 L2201.8 1707.9 L2202.4 1712.4 L2203 1716.4 L2203.7 1719.9 L2204.3 1723 L2205 1725.6 L2205.6 1727.7 L2206.2 1729.4 L2206.9 1730.6 L2207.5 1731.3 L2208.2 1731.5 L2208.8 1731.3 L2209.5 1730.6 L2210.1 1729.4 L2210.7 1727.7 L2211.4 1725.6 L2212 1723 L2212.7 1719.9 L2213.3 1716.4 L2214 1712.4 L2214.6 1707.9 L2215.2 1703 L2215.9 1697.6 L2216.5 1691.8 L2217.2 1685.5 L2217.8 1678.8 L2218.4 1671.7 L2219.1 1664.1 L2219.7 1656.1 L2220.4 1647.6 L2221 1638.8 L2221.7 1629.5 L2222.3 1619.9 L2222.9 1609.8 L2223.6 1599.3 L2224.2 1588.5 L2224.9 1577.3 L2225.5 1565.7 L2226.2 1553.8 L2226.8 1541.5 L2227.4 1528.8 L2228.1 1515.8 L2228.7 1502.5 L2229.4 1488.9 L2230 1475 L2230.6 1460.8 L2231.3 1446.2 L2231.9 1431.5 L2232.6 1416.4 L2233.2 1401.1 L2233.9 1385.5 L2234.5 1369.7 L2235.1 1353.7 L2235.8 1337.4 L2236.4 1321 L2237.1 1304.3 L2237.7 1287.5 L2238.4 1270.5 L2239 1253.3 L2239.6 1236 L2240.3 1218.6 L2240.9 1201 L2241.6 1183.4 L2242.2 1165.6 L2242.8 1147.8 L2243.5 1129.8 L2244.1 1111.8 L2244.8 1093.8 L2245.4 1075.7 L2246.1 1057.6 L2246.7 1039.5 L2247.3 1021.4 L2248 1003.3 L2248.6 985.2 L2249.3 967.2 L2249.9 949.2 L2250.6 931.2 L2251.2 913.4 L2251.8 895.6 L2252.5 878 L2253.1 860.4 L2253.8 843 L2254.4 825.7 L2255 808.5 L2255.7 791.5 L2256.3 774.7 L2257 758 L2257.6 741.6 L2258.3 725.3 L2258.9 709.3 L2259.5 693.5 L2260.2 677.9 L2260.8 662.6 L2261.5 647.5 L2262.1 632.8 L2262.8 618.2 L2263.4 604 L2264 590.1 L2264.7 576.5 L2265.3 563.2 L2266 550.2 L2266.6 537.5 L2267.2 525.2 L2267.9 513.3 L2268.5 501.7 L2269.2 490.5 L2269.8 479.7 L2270.5 469.2 L2271.1 459.1 L2271.7 449.5 L2272.4 440.2 L2273 431.4 L2273.7 422.9 L2274.3 414.9 L2275 407.3 L2275.6 400.2 L2276.2 393.5 L2276.9 387.2 L2277.5 381.4 L2278.2 376 L2278.8 371.1 L2279.4 366.6 L2280.1 362.6 L2280.7 359.1 L2281.4 356 L2282 353.4 L2282.7 351.3 L2283.3 349.6 L2283.9 348.4 L2284.6 347.7 L2285.2 347.5 L2285.9 347.7 L2286.5 348.4 L2287.2 349.6 L2287.8 351.3 L2288.4 353.4 L2289.1 356 L2289.7 359.1 L2290.4 362.6 L2291 366.6 L2291.6 371.1 L2292.3 376 L2292.9 381.4 L2293.6 387.2 L2294.2 393.5 L2294.9 400.2 L2295.5 407.3 L2296.1 414.9 L2296.8 422.9 L2297.4 431.4 L2298.1 440.2 L2298.7 449.5 L2299.4 459.1 L2300 469.2 L2300.6 479.7 L2301.3 490.5 L2301.9 501.7 L2302.6 513.3 L2303.2 525.2 L2303.8 537.5 L2304.5 550.2 L2305.1 563.2 L2305.8 576.5 L2306.4 590.1 L2307.1 604 L2307.7 618.2 L2308.3 632.8 L2309 647.5 L2309.6 662.6 L2310.3 677.9 L2310.9 693.5 L2311.6 709.3 L2312.2 725.3 L2312.8 741.6 L2313.5 758 L2314.1 774.7 L2314.8 791.5 L2315.4 808.5 L2316 825.7 L2316.7 843 L2317.3 860.4 L2318 878 L2318.6 895.6 L2319.3 913.4 L2319.9 931.2 L2320.5 949.2 L2321.2 967.2 L2321.8 985.2 L2322.5 1003.3 L2323.1 1021.4 L2323.8 1039.5 L2324.4 1057.6 L2325 1075.7 L2325.7 1093.8 L2326.3 1111.8 L2327 1129.8 L2327.6 1147.8 L2328.2 1165.6 L2328.9 1183.4 L2329.5 1201 L2330.2 1218.6 L2330.8 1236 L2331.5 1253.3 L2332.1 1270.5 L2332.7 1287.5 L2333.4 1304.3 L2334 1321 L2334.7 1337.4 L2335.3 1353.7 L2335.9 1369.7 L2336.6 1385.5 L2337.2 1401.1 L2337.9 1416.4 L2338.5 1431.5 L2339.2 1446.2 L2339.8 1460.8 L2340.4 1475 L2341.1 1488.9 L2341.7 1502.5 L2342.4 1515.8 L2343 1528.8 L2343.7 1541.5 L2344.3 1553.8 L2344.9 1565.7 L2345.6 1577.3 L2346.2 1588.5 L2346.9 1599.3 L2347.5 1609.8 L2348.1 1619.9 L2348.8 1629.5 L2349.4 1638.8 L2350.1 1647.6 L2350.7 1656.1 L2351.4 1664.1 L2352 1671.7 L2352.6 1678.8 L2353.3 1685.5 L2353.9 1691.8 L2354.6 1697.6 L2355.2 1703 L2355.9 1707.9 L2356.5 1712.4 L2357.1 1716.4 L2357.8 1719.9 L2358.4 1723 L2359.1 1725.6 L2359.7 1727.7 L2360.3 1729.4 L2361 1730.6 L2361.6 1731.3 L2362.3 1731.5 L2362.9 1731.3 L2363.6 1730.6 L2364.2 1729.4 L2364.8 1727.7 L2365.5 1725.6 L2366.1 1723 L2366.8 1719.9 L2367.4 1716.4 L2368.1 1712.4 L2368.7 1707.9 L2369.3 1703 L2370 1697.6 L2370.6 1691.8 L2371.3 1685.5 L2371.9 1678.8 L2372.5 1671.7 L2373.2 1664.1 L2373.8 1656.1 L2374.5 1647.6 L2375.1 1638.8 L2375.8 1629.5 L2376.4 1619.9 L2377 1609.8 L2377.7 1599.3 L2378.3 1588.5 L2379 1577.3 L2379.6 1565.7 L2380.3 1553.8 L2380.9 1541.5 L2381.5 1528.8 L2382.2 1515.8 L2382.8 1502.5 L2383.5 1488.9 L2384.1 1475 L2384.7 1460.8 L2385.4 1446.2 L2386 1431.5 L2386.7 1416.4 L2387.3 1401.1 L2388 1385.5 L2388.6 1369.7 L2389.2 1353.7 L2389.9 1337.4 L2390.5 1321 L2391.2 1304.3 L2391.8 1287.5 L2392.5 1270.5 L2393.1 1253.3 L2393.7 1236 L2394.4 1218.6 L2395 1201 L2395.7 1183.4 L2396.3 1165.6 L2396.9 1147.8 L2397.6 1129.8 L2398.2 1111.8 L2398.9 1093.8 L2399.5 1075.7 L2400.2 1057.6 L2400.8 1039.5 L2401.4 1021.4 L2402.1 1003.3 L2402.7 985.2 L2403.4 967.2 L2404 949.2 L2404.7 931.2 L2405.3 913.4 L2405.9 895.6 L2406.6 878 L2407.2 860.4 L2407.9 843 L2408.5 825.7 L2409.1 808.5 L2409.8 791.5 L2410.4 774.7 L2411.1 758 L2411.7 741.6 L2412.4 725.3 L2413 709.3 L2413.6 693.5 L2414.3 677.9 L2414.9 662.6 L2415.6 647.5 L2416.2 632.8 L2416.9 618.2 L2417.5 604 L2418.1 590.1 L2418.8 576.5 L2419.4 563.2 L2420.1 550.2 L2420.7 537.5 L2421.3 525.2 L2422 513.3 L2422.6 501.7 L2423.3 490.5 L2423.9 479.7 L2424.6 469.2 L2425.2 459.1 L2425.8 449.5 L2426.5 440.2 L2427.1 431.4 L2427.8 422.9 L2428.4 414.9 L2429.1 407.3 L2429.7 400.2 L2430.3 393.5 L2431 387.2 L2431.6 381.4 L2432.3 376 L2432.9 371.1 L2433.5 366.6 L2434.2 362.6 L2434.8 359.1 L2435.5 356 L2436.1 353.4 L2436.8 351.3 L2437.4 349.6 L2438 348.4 L2438.7 347.7 L2439.3 347.5 L2440 347.7 L2440.6 348.4 L2441.3 349.6 L2441.9 351.3 L2442.5 353.4 L2443.2 356 L2443.8 359.1 L2444.5 362.6 L2445.1 366.6 L2445.7 371.1 L2446.4 376 L2447 381.4 L2447.7 387.2 L2448.3 393.5 L2449 400.2 L2449.6 407.3 L2450.2 414.9 L2450.9 422.9 L2451.5 431.4 L2452.2 440.2 L2452.8 449.5 L2453.5 459.1 L2454.1 469.2 L2454.7 479.7 L2455.4 490.5 L2456 501.7 L2456.7 513.3 L2457.3 525.2 L2457.9 537.5 L2458.6 550.2 L2459.2 563.2 L2459.9 576.5 L2460.5 590.1 L2461.2 604 L2461.8 618.2 L2462.4 632.8 L2463.1 647.5 L2463.7 662.6 L2464.4 677.9 L2465 693.5 L2465.7 709.3 L2466.3 725.3 L2466.9 741.6 L2467.6 758 L2468.2 774.7 L2468.9 791.5 L2469.5 808.5 L2470.1 825.7 L2470.8 843 L2471.4 860.4 L2472.1 878 L2472.7 895.6 L2473.4 913.4 L2474 931.2 L2474.6 949.2 L2475.3 967.2 L2475.9 985.2 L2476.6 1003.3 L2477.2 1021.4 L2477.8 1039.5 L2478.5 1057.6 L2479.1 1075.7 L2479.8 1093.8 L2480.4 1111.8 L2481.1 1129.8 L2481.7 1147.8 L2482.3 1165.6 L2483 1183.4 L2483.6 1201 L2484.3 1218.6 L2484.9 1236 L2485.6 1253.3 L2486.2 1270.5 L2486.8 1287.5 L2487.5 1304.3 L2488.1 1321 L2488.8 1337.4 L2489.4 1353.7 L2490 1369.7 L2490.7 1385.5 L2491.3 1401.1 L2492 1416.4 L2492.6 1431.5 L2493.3 1446.2 L2493.9 1460.8 L2494.5 1475 L2495.2 1488.9 L2495.8 1502.5 L2496.5 1515.8 L2497.1 1528.8 L2497.8 1541.5 L2498.4 1553.8 L2499 1565.7 L2499.7 1577.3 L2500.3 1588.5 L2501 1599.3 L2501.6 1609.8 L2502.2 1619.9 L2502.9 1629.5 L2503.5 1638.8 L2504.2 1647.6 L2504.8 1656.1 L2505.5 1664.1 L2506.1 1671.7 L2506.7 1678.8 L2507.4 1685.5 L2508 1691.8 L2508.7 1697.6 L2509.3 1703 L2510 1707.9 L2510.6 1712.4 L2511.2 1716.4 L2511.9 1719.9 L2512.5 1723 L2513.2 1725.6 L2513.8 1727.7 L2514.4 1729.4 L2515.1 1730.6 L2515.7 1731.3 L2516.4 1731.5 L2517 1731.3 L2517.7 1730.6 L2518.3 1729.4 L2518.9 1727.7 L2519.6 1725.6 L2520.2 1723 L2520.9 1719.9 L2521.5 1716.4 L2522.2 1712.4 L2522.8 1707.9 L2523.4 1703 L2524.1 1697.6 L2524.7 1691.8 L2525.4 1685.5 L2526 1678.8 L2526.6 1671.7 L2527.3 1664.1 L2527.9 1656.1 L2528.6 1647.6 L2529.2 1638.8 L2529.9 1629.5 L2530.5 1619.9 L2531.1 1609.8 L2531.8 1599.3 L2532.4 1588.5 L2533.1 1577.3 L2533.7 1565.7 L2534.4 1553.8 L2535 1541.5 L2535.6 1528.8 L2536.3 1515.8 L2536.9 1502.5 L2537.6 1488.9 L2538.2 1475 L2538.8 1460.8 L2539.5 1446.2 L2540.1 1431.5 L2540.8 1416.4 L2541.4 1401.1 L2542.1 1385.5 L2542.7 1369.7 L2543.3 1353.7 L2544 1337.4 L2544.6 1321 L2545.3 1304.3 L2545.9 1287.5 L2546.6 1270.5 L2547.2 1253.3 L2547.8 1236 L2548.5 1218.6 L2549.1 1201 L2549.8 1183.4 L2550.4 1165.6 L2551 1147.8 L2551.7 1129.8 L2552.3 1111.8 L2553 1093.8 L2553.6 1075.7 L2554.3 1057.6 L2554.9 1039.5 L2555.5 1021.4 L2556.2 1003.3 L2556.8 985.2 L2557.5 967.2 L2558.1 949.2 L2558.8 931.2 L2559.4 913.4 L2560 895.6 L2560.7 878 L2561.3 860.4 L2562 843 L2562.6 825.7 L2563.2 808.5 L2563.9 791.5 L2564.5 774.7 L2565.2 758 L2565.8 741.6 L2566.5 725.3 L2567.1 709.3 L2567.7 693.5 L2568.4 677.9 L2569 662.6 L2569.7 647.5 L2570.3 632.8 L2571 618.2 L2571.6 604 L2572.2 590.1 L2572.9 576.5 L2573.5 563.2 L2574.2 550.2 L2574.8 537.5 L2575.4 525.2 L2576.1 513.3 L2576.7 501.7 L2577.4 490.5 L2578 479.7 L2578.7 469.2 L2579.3 459.1 L2579.9 449.5 L2580.6 440.2 L2581.2 431.4 L2581.9 422.9 L2582.5 414.9 L2583.2 407.3 L2583.8 400.2 L2584.4 393.5 L2585.1 387.2 L2585.7 381.4 L2586.4 376 L2587 371.1 L2587.6 366.6 L2588.3 362.6 L2588.9 359.1 L2589.6 356 L2590.2 353.4 L2590.9 351.3 L2591.5 349.6 L2592.1 348.4 L2592.8 347.7 L2593.4 347.5 L2594.1 347.7 L2594.7 348.4 L2595.4 349.6 L2596 351.3 L2596.6 353.4 L2597.3 356 L2597.9 359.1 L2598.6 362.6 L2599.2 366.6 L2599.8 371.1 L2600.5 376 L2601.1 381.4 L2601.8 387.2 L2602.4 393.5 L2603.1 400.2 L2603.7 407.3 L2604.3 414.9 L2605 422.9 L2605.6 431.4 L2606.3 440.2 L2606.9 449.5 L2607.6 459.1 L2608.2 469.2 L2608.8 479.7 L2609.5 490.5 L2610.1 501.7 L2610.8 513.3 L2611.4 525.2 L2612 537.5 L2612.7 550.2 L2613.3 563.2 L2614 576.5 L2614.6 590.1 L2615.3 604 L2615.9 618.2 L2616.5 632.8 L2617.2 647.5 L2617.8 662.6 L2618.5 677.9 L2619.1 693.5 L2619.8 709.3 L2620.4 725.3 L2621 741.6 L2621.7 758 L2622.3 774.7 L2623 791.5 L2623.6 808.5 L2624.2 825.7 L2624.9 843 L2625.5 860.4 L2626.2 878 L2626.8 895.6 L2627.5 913.4 L2628.1 931.2 L2628.7 949.2 L2629.4 967.2 L2630 985.2 L2630.7 1003.3 L2631.3 1021.4 L2631.9 1039.5 L2632.6 1057.6 L2633.2 1075.7 L2633.9 1093.8 L2634.5 1111.8 L2635.2 1129.8 L2635.8 1147.8 L2636.4 1165.6 L2637.1 1183.4 L2637.7 1201 L2638.4 1218.6 L2639 1236 L2639.7 1253.3 L2640.3 1270.5 L2640.9 1287.5 L2641.6 1304.3 L2642.2 1321 L2642.9 1337.4 L2643.5 1353.7 L2644.1 1369.7 L2644.8 1385.5 L2645.4 1401.1 L2646.1 1416.4 L2646.7 1431.5 L2647.4 1446.2 L2648 1460.8 L2648.6 1475 L2649.3 1488.9 L2649.9 1502.5 L2650.6 1515.8 L2651.2 1528.8 L2651.9 1541.5 L2652.5 1553.8 L2653.1 1565.7 L2653.8 1577.3 L2654.4 1588.5 L2655.1 1599.3 L2655.7 1609.8 L2656.3 1619.9 L2657 1629.5 L2657.6 1638.8 L2658.3 1647.6 L2658.9 1656.1 L2659.6 1664.1 L2660.2 1671.7 L2660.8 1678.8 L2661.5 1685.5 L2662.1 1691.8 L2662.8 1697.6 L2663.4 1703 L2664.1 1707.9 L2664.7 1712.4 L2665.3 1716.4 L2666 1719.9 L2666.6 1723 L2667.3 1725.6 L2667.9 1727.7 L2668.5 1729.4 L2669.2 1730.6 L2669.8 1731.3 L2670.5 1731.5 L2671.1 1731.3 L2671.8 1730.6 L2672.4 1729.4 L2673 1727.7 L2673.7 1725.6 L2674.3 1723 L2675 1719.9 L2675.6 1716.4 L2676.3 1712.4 L2676.9 1707.9 L2677.5 1703 L2678.2 1697.6 L2678.8 1691.8 L2679.5 1685.5 L2680.1 1678.8 L2680.7 1671.7 L2681.4 1664.1 L2682 1656.1 L2682.7 1647.6 L2683.3 1638.8 L2684 1629.5 L2684.6 1619.9 L2685.2 1609.8 L2685.9 1599.3 L2686.5 1588.5 L2687.2 1577.3 L2687.8 1565.7 L2688.5 1553.8 L2689.1 1541.5 L2689.7 1528.8 L2690.4 1515.8 L2691 1502.5 L2691.7 1488.9 L2692.3 1475 L2692.9 1460.8 L2693.6 1446.2 L2694.2 1431.5 L2694.9 1416.4 L2695.5 1401.1 L2696.2 1385.5 L2696.8 1369.7 L2697.4 1353.7 L2698.1 1337.4 L2698.7 1321 L2699.4 1304.3 L2700 1287.5 L2700.7 1270.5 L2701.3 1253.3 L2701.9 1236 L2702.6 1218.6 L2703.2 1201 L2703.9 1183.4 L2704.5 1165.6 L2705.1 1147.8 L2705.8 1129.8 L2706.4 1111.8 L2707.1 1093.8 L2707.7 1075.7 L2708.4 1057.6 L2709 1039.5 L2709.6 1021.4 L2710.3 1003.3 L2710.9 985.2 L2711.6 967.2 L2712.2 949.2 L2712.9 931.2 L2713.5 913.4 L2714.1 895.6 L2714.8 878 L2715.4 860.4 L2716.1 843 L2716.7 825.7 L2717.3 808.5 L2718 791.5 L2718.6 774.7 L2719.3 758 L2719.9 741.6 L2720.6 725.3 L2721.2 709.3 L2721.8 693.5 L2722.5 677.9 L2723.1 662.6 L2723.8 647.5 L2724.4 632.8 L2725.1 618.2 L2725.7 604 L2726.3 590.1 L2727 576.5 L2727.6 563.2 L2728.3 550.2 L2728.9 537.5 L2729.5 525.2 L2730.2 513.3 L2730.8 501.7 L2731.5 490.5 L2732.1 479.7 L2732.8 469.2 L2733.4 459.1 L2734 449.5 L2734.7 440.2 L2735.3 431.4 L2736 422.9 L2736.6 414.9 L2737.3 407.3 L2737.9 400.2 L2738.5 393.5 L2739.2 387.2 L2739.8 381.4 L2740.5 376 L2741.1 371.1 L2741.7 366.6 L2742.4 362.6 L2743 359.1 L2743.7 356 L2744.3 353.4 L2745 351.3 L2745.6 349.6 L2746.2 348.4 L2746.9 347.7 L2747.5 347.5 L2748.2 347.7 L2748.8 348.4 L2749.5 349.6 L2750.1 351.3 L2750.7 353.4 L2751.4 356 L2752 359.1 L2752.7 362.6 L2753.3 366.6 L2753.9 371.1 L2754.6 376 L2755.2 381.4 L2755.9 387.2 L2756.5 393.5 L2757.2 400.2 L2757.8 407.3 L2758.4 414.9 L2759.1 422.9 L2759.7 431.4 L2760.4 440.2 L2761 449.5 L2761.7 459.1 L2762.3 469.2 L2762.9 479.7 L2763.6 490.5 L2764.2 501.7 L2764.9 513.3 L2765.5 525.2 L2766.1 537.5 L2766.8 550.2 L2767.4 563.2 L2768.1 576.5 L2768.7 590.1 L2769.4 604 L2770 618.2 L2770.6 632.8 L2771.3 647.5 L2771.9 662.6 L2772.6 677.9 L2773.2 693.5 L2773.9 709.3 L2774.5 725.3 L2775.1 741.6 L2775.8 758 L2776.4 774.7 L2777.1 791.5 L2777.7 808.5 L2778.3 825.7 L2779 843 L2779.6 860.4 L2780.3 878 L2780.9 895.6 L2781.6 913.4 L2782.2 931.2 L2782.8 949.2 L2783.5 967.2 L2784.1 985.2 L2784.8 1003.3 L2785.4 1021.4 L2786.1 1039.5 L2786.7 1057.6 L2787.3 1075.7 L2788 1093.8 L2788.6 1111.8 L2789.3 1129.8 L2789.9 1147.8 L2790.5 1165.6 L2791.2 1183.4 L2791.8 1201 L2792.5 1218.6 L2793.1 1236 L2793.8 1253.3 L2794.4 1270.5 L2795 1287.5 L2795.7 1304.3 L2796.3 1321 L2797 1337.4 L2797.6 1353.7 L2798.2 1369.7 L2798.9 1385.5 L2799.5 1401.1 L2800.2 1416.4 L2800.8 1431.5 L2801.5 1446.2 L2802.1 1460.8 L2802.7 1475 L2803.4 1488.9 L2804 1502.5 L2804.7 1515.8 L2805.3 1528.8 L2806 1541.5 L2806.6 1553.8 L2807.2 1565.7 L2807.9 1577.3 L2808.5 1588.5 L2809.2 1599.3 L2809.8 1609.8 L2810.4 1619.9 L2811.1 1629.5 L2811.7 1638.8 L2812.4 1647.6 L2813 1656.1 L2813.7 1664.1 L2814.3 1671.7 L2814.9 1678.8 L2815.6 1685.5 L2816.2 1691.8 L2816.9 1697.6 L2817.5 1703 L2818.2 1707.9 L2818.8 1712.4 L2819.4 1716.4 L2820.1 1719.9 L2820.7 1723 L2821.4 1725.6 L2822 1727.7 L2822.6 1729.4 L2823.3 1730.6 L2823.9 1731.3 L2824.6 1731.5 L2825.2 1731.3 L2825.9 1730.6 L2826.5 1729.4 L2827.1 1727.7 L2827.8 1725.6 L2828.4 1723 L2829.1 1719.9 L2829.7 1716.4 L2830.4 1712.4 L2831 1707.9 L2831.6 1703 L2832.3 1697.6 L2832.9 1691.8 L2833.6 1685.5 L2834.2 1678.8 L2834.8 1671.7 L2835.5 1664.1 L2836.1 1656.1 L2836.8 1647.6 L2837.4 1638.8 L2838.1 1629.5 L2838.7 1619.9 L2839.3 1609.8 L2840 1599.3 L2840.6 1588.5 L2841.3 1577.3 L2841.9 1565.7 L2842.6 1553.8 L2843.2 1541.5 L2843.8 1528.8 L2844.5 1515.8 L2845.1 1502.5 L2845.8 1488.9 L2846.4 1475 L2847 1460.8 L2847.7 1446.2 L2848.3 1431.5 L2849 1416.4 L2849.6 1401.1 L2850.3 1385.5 L2850.9 1369.7 L2851.5 1353.7 L2852.2 1337.4 L2852.8 1321 L2853.5 1304.3 L2854.1 1287.5 L2854.8 1270.5 L2855.4 1253.3 L2856 1236 L2856.7 1218.6 L2857.3 1201 L2858 1183.4 L2858.6 1165.6 L2859.2 1147.8 L2859.9 1129.8 L2860.5 1111.8 L2861.2 1093.8 L2861.8 1075.7 L2862.5 1057.6 L2863.1 1039.5 L2863.7 1021.4 L2864.4 1003.3 L2865 985.2 L2865.7 967.2 L2866.3 949.2 L2867 931.2 L2867.6 913.4 L2868.2 895.6 L2868.9 878 L2869.5 860.4 L2870.2 843 L2870.8 825.7 L2871.4 808.5 L2872.1 791.5 L2872.7 774.7 L2873.4 758 L2874 741.6 L2874.7 725.3 L2875.3 709.3 L2875.9 693.5 L2876.6 677.9 L2877.2 662.6 L2877.9 647.5 L2878.5 632.8 L2879.2 618.2 L2879.8 604 L2880.4 590.1 L2881.1 576.5 L2881.7 563.2 L2882.4 550.2 L2883 537.5 L2883.6 525.2 L2884.3 513.3 L2884.9 501.7 L2885.6 490.5 L2886.2 479.7 L2886.9 469.2 L2887.5 459.1 L2888.1 449.5 L2888.8 440.2 L2889.4 431.4 L2890.1 422.9 L2890.7 414.9 L2891.4 407.3 L2892 400.2 L2892.6 393.5 L2893.3 387.2 L2893.9 381.4 L2894.6 376 L2895.2 371.1 L2895.8 366.6 L2896.5 362.6 L2897.1 359.1 L2897.8 356 L2898.4 353.4 L2899.1 351.3 L2899.7 349.6 L2900.3 348.4 L2901 347.7 L2901.6 347.5 L2902.3 347.7 L2902.9 348.4 L2903.6 349.6 L2904.2 351.3 L2904.8 353.4 L2905.5 356 L2906.1 359.1 L2906.8 362.6 L2907.4 366.6 L2908 371.1 L2908.7 376 L2909.3 381.4 L2910 387.2 L2910.6 393.5 L2911.3 400.2 L2911.9 407.3 L2912.5 414.9 L2913.2 422.9 L2913.8 431.4 L2914.5 440.2 L2915.1 449.5 L2915.8 459.1 L2916.4 469.2 L2917 479.7 L2917.7 490.5 L2918.3 501.7 L2919 513.3 L2919.6 525.2 L2920.2 537.5 L2920.9 550.2 L2921.5 563.2 L2922.2 576.5 L2922.8 590.1 L2923.5 604 L2924.1 618.2 L2924.7 632.8 L2925.4 647.5 L2926 662.6 L2926.7 677.9 L2927.3 693.5 L2928 709.3 L2928.6 725.3 L2929.2 741.6 L2929.9 758 L2930.5 774.7 L2931.2 791.5 L2931.8 808.5 L2932.4 825.7 L2933.1 843 L2933.7 860.4 L2934.4 878 L2935 895.6 L2935.7 913.4 L2936.3 931.2 L2936.9 949.2 L2937.6 967.2 L2938.2 985.2 L2938.9 1003.3 L2939.5 1021.4 L2940.2 1039.5 L2940.8 1057.6 L2941.4 1075.7 L2942.1 1093.8 L2942.7 1111.8 L2943.4 1129.8 L2944 1147.8 L2944.6 1165.6 L2945.3 1183.4 L2945.9 1201 L2946.6 1218.6 L2947.2 1236 L2947.9 1253.3 L2948.5 1270.5 L2949.1 1287.5 L2949.8 1304.3 L2950.4 1321 L2951.1 1337.4 L2951.7 1353.7 L2952.3 1369.7 L2953 1385.5 L2953.6 1401.1 L2954.3 1416.4 L2954.9 1431.5 L2955.6 1446.2 L2956.2 1460.8 L2956.8 1475 L2957.5 1488.9 L2958.1 1502.5 L2958.8 1515.8 L2959.4 1528.8 L2960.1 1541.5 L2960.7 1553.8 L2961.3 1565.7 L2962 1577.3 L2962.6 1588.5 L2963.3 1599.3 L2963.9 1609.8 L2964.5 1619.9 L2965.2 1629.5 L2965.8 1638.8 L2966.5 1647.6 L2967.1 1656.1 L2967.8 1664.1 L2968.4 1671.7 L2969 1678.8 L2969.7 1685.5 L2970.3 1691.8 L2971 1697.6 L2971.6 1703 L2972.3 1707.9 L2972.9 1712.4 L2973.5 1716.4 L2974.2 1719.9 L2974.8 1723 L2975.5 1725.6 L2976.1 1727.7 L2976.7 1729.4 L2977.4 1730.6 L2978 1731.3 L2978.7 1731.5 L2979.3 1731.3 L2980 1730.6 L2980.6 1729.4 L2981.2 1727.7 L2981.9 1725.6 L2982.5 1723 L2983.2 1719.9 L2983.8 1716.4 L2984.5 1712.4 L2985.1 1707.9 L2985.7 1703 L2986.4 1697.6 L2987 1691.8 L2987.7 1685.5 L2988.3 1678.8 L2988.9 1671.7 L2989.6 1664.1 L2990.2 1656.1 L2990.9 1647.6 L2991.5 1638.8 L2992.2 1629.5 L2992.8 1619.9 L2993.4 1609.8 L2994.1 1599.3 L2994.7 1588.5 L2995.4 1577.3 L2996 1565.7 L2996.7 1553.8 L2997.3 1541.5 L2997.9 1528.8 L2998.6 1515.8 L2999.2 1502.5 L2999.9 1488.9 L3000.5 1475 L3001.1 1460.8 L3001.8 1446.2 L3002.4 1431.5 L3003.1 1416.4 L3003.7 1401.1 L3004.4 1385.5 L3005 1369.7 L3005.6 1353.7 L3006.3 1337.4 L3006.9 1321 L3007.6 1304.3 L3008.2 1287.5 L3008.9 1270.5 L3009.5 1253.3 L3010.1 1236 L3010.8 1218.6 L3011.4 1201 L3012.1 1183.4 L3012.7 1165.6 L3013.3 1147.8 L3014 1129.8 L3014.6 1111.8 L3015.3 1093.8 L3015.9 1075.7 L3016.6 1057.6 L3017.2 1039.5 L3017.8 1021.4 L3018.5 1003.3 L3019.1 985.2 L3019.8 967.2 L3020.4 949.2 L3021.1 931.2 L3021.7 913.4 L3022.3 895.6 L3023 878 L3023.6 860.4 L3024.3 843 L3024.9 825.7 L3025.5 808.5 L3026.2 791.5 L3026.8 774.7 L3027.5 758 L3028.1 741.6 L3028.8 725.3 L3029.4 709.3 L3030 693.5 L3030.7 677.9 L3031.3 662.6 L3032 647.5 L3032.6 632.8 L3033.3 618.2 L3033.9 604 L3034.5 590.1 L3035.2 576.5 L3035.8 563.2 L3036.5 550.2 L3037.1 537.5 L3037.7 525.2 L3038.4 513.3 L3039 501.7 L3039.7 490.5 L3040.3 479.7 L3041 469.2 L3041.6 459.1 L3042.2 449.5 L3042.9 440.2 L3043.5 431.4 L3044.2 422.9 L3044.8 414.9 L3045.5 407.3 L3046.1 400.2 L3046.7 393.5 L3047.4 387.2 L3048 381.4 L3048.7 376 L3049.3 371.1 L3049.9 366.6 L3050.6 362.6 L3051.2 359.1 L3051.9 356 L3052.5 353.4 L3053.2 351.3 L3053.8 349.6 L3054.4 348.4 L3055.1 347.7 L3055.7 347.5 L3056.4 347.7 L3057 348.4 L3057.7 349.6 L3058.3 351.3 L3058.9 353.4 L3059.6 356 L3060.2 359.1 L3060.9 362.6 L3061.5 366.6 L3062.1 371.1 L3062.8 376 L3063.4 381.4 L3064.1 387.2 L3064.7 393.5 L3065.4 400.2 L3066 407.3 L3066.6 414.9 L3067.3 422.9 L3067.9 431.4 L3068.6 440.2 L3069.2 449.5 L3069.9 459.1 L3070.5 469.2 L3071.1 479.7 L3071.8 490.5 L3072.4 501.7 L3073.1 513.3 L3073.7 525.2 L3074.3 537.5 L3075 550.2 L3075.6 563.2 L3076.3 576.5 L3076.9 590.1 L3077.6 604 L3078.2 618.2 L3078.8 632.8 L3079.5 647.5 L3080.1 662.6 L3080.8 677.9 L3081.4 693.5 L3082.1 709.3 L3082.7 725.3 L3083.3 741.6 L3084 758 L3084.6 774.7 L3085.3 791.5 L3085.9 808.5 L3086.5 825.7 L3087.2 843 L3087.8 860.4 L3088.5 878 L3089.1 895.6 L3089.8 913.4 L3090.4 931.2 L3091 949.2 L3091.7 967.2 L3092.3 985.2 L3093 1003.3 L3093.6 1021.4 L3094.2 1039.5 L3094.9 1057.6 L3095.5 1075.7 L3096.2 1093.8 L3096.8 1111.8 L3097.5 1129.8 L3098.1 1147.8 L3098.7 1165.6 L3099.4 1183.4 L3100 1201 L3100.7 1218.6 L3101.3 1236 L3102 1253.3 L3102.6 1270.5 L3103.2 1287.5 L3103.9 1304.3 L3104.5 1321 L3105.2 1337.4 L3105.8 1353.7 L3106.4 1369.7 L3107.1 1385.5 L3107.7 1401.1 L3108.4 1416.4 L3109 1431.5 L3109.7 1446.2 L3110.3 1460.8 L3110.9 1475 L3111.6 1488.9 L3112.2 1502.5 L3112.9 1515.8 L3113.5 1528.8 L3114.2 1541.5 L3114.8 1553.8 L3115.4 1565.7 L3116.1 1577.3 L3116.7 1588.5 L3117.4 1599.3 L3118 1609.8 L3118.6 1619.9 L3119.3 1629.5 L3119.9 1638.8 L3120.6 1647.6 L3121.2 1656.1 L3121.9 1664.1 L3122.5 1671.7 L3123.1 1678.8 L3123.8 1685.5 L3124.4 1691.8 L3125.1 1697.6 L3125.7 1703 L3126.4 1707.9 L3127 1712.4 L3127.6 1716.4 L3128.3 1719.9 L3128.9 1723 L3129.6 1725.6 L3130.2 1727.7 L3130.8 1729.4 L3131.5 1730.6 L3132.1 1731.3 L3132.8 1731.5 L3133.4 1731.3 L3134.1 1730.6 L3134.7 1729.4 L3135.3 1727.7 L3136 1725.6 L3136.6 1723 L3137.3 1719.9 L3137.9 1716.4 L3138.6 1712.4 L3139.2 1707.9 L3139.8 1703 L3140.5 1697.6 L3141.1 1691.8 L3141.8 1685.5 L3142.4 1678.8 L3143 1671.7 L3143.7 1664.1 L3144.3 1656.1 L3145 1647.6 L3145.6 1638.8 L3146.3 1629.5 L3146.9 1619.9 L3147.5 1609.8 L3148.2 1599.3 L3148.8 1588.5 L3149.5 1577.3 L3150.1 1565.7 L3150.8 1553.8 L3151.4 1541.5 L3152 1528.8 L3152.7 1515.8 L3153.3 1502.5 L3154 1488.9 L3154.6 1475 L3155.2 1460.8 L3155.9 1446.2 L3156.5 1431.5 L3157.2 1416.4 L3157.8 1401.1 L3158.5 1385.5 L3159.1 1369.7 L3159.7 1353.7 L3160.4 1337.4 L3161 1321 L3161.7 1304.3 L3162.3 1287.5 L3163 1270.5 L3163.6 1253.3 L3164.2 1236 L3164.9 1218.6 L3165.5 1201 L3166.2 1183.4 L3166.8 1165.6 L3167.4 1147.8 L3168.1 1129.8 L3168.7 1111.8 L3169.4 1093.8 L3170 1075.7 L3170.7 1057.6 L3171.3 1039.5 L3171.9 1021.4 L3172.6 1003.3 L3173.2 985.2 L3173.9 967.2 L3174.5 949.2 L3175.2 931.2 L3175.8 913.4 L3176.4 895.6 L3177.1 878 L3177.7 860.4 L3178.4 843 L3179 825.7 L3179.6 808.5 L3180.3 791.5 L3180.9 774.7 L3181.6 758 L3182.2 741.6 L3182.9 725.3 L3183.5 709.3 L3184.1 693.5 L3184.8 677.9 L3185.4 662.6 L3186.1 647.5 L3186.7 632.8 L3187.4 618.2 L3188 604 L3188.6 590.1 L3189.3 576.5 L3189.9 563.2 L3190.6 550.2 L3191.2 537.5 L3191.8 525.2 L3192.5 513.3 L3193.1 501.7 L3193.8 490.5 L3194.4 479.7 L3195.1 469.2 L3195.7 459.1 L3196.3 449.5 L3197 440.2 L3197.6 431.4 L3198.3 422.9 L3198.9 414.9 L3199.6 407.3 L3200.2 400.2 L3200.8 393.5 L3201.5 387.2 L3202.1 381.4 L3202.8 376 L3203.4 371.1 L3204 366.6 L3204.7 362.6 L3205.3 359.1 L3206 356 L3206.6 353.4 L3207.3 351.3 L3207.9 349.6 L3208.5 348.4 L3209.2 347.7 L3209.8 347.5 L3210.5 347.7 L3211.1 348.4 L3211.8 349.6 L3212.4 351.3 L3213 353.4 L3213.7 356 L3214.3 359.1 L3215 362.6 L3215.6 366.6 L3216.2 371.1 L3216.9 376 L3217.5 381.4 L3218.2 387.2 L3218.8 393.5 L3219.5 400.2 L3220.1 407.3 L3220.7 414.9 L3221.4 422.9 L3222 431.4 L3222.7 440.2 L3223.3 449.5 L3224 459.1 L3224.6 469.2 L3225.2 479.7 L3225.9 490.5 L3226.5 501.7 L3227.2 513.3 L3227.8 525.2 L3228.4 537.5 L3229.1 550.2 L3229.7 563.2 L3230.4 576.5 L3231 590.1 L3231.7 604 L3232.3 618.2 L3232.9 632.8 L3233.6 647.5 L3234.2 662.6 L3234.9 677.9 L3235.5 693.5 L3236.2 709.3 L3236.8 725.3 L3237.4 741.6 L3238.1 758 L3238.7 774.7 L3239.4 791.5 L3240 808.5 L3240.6 825.7 L3241.3 843 L3241.9 860.4 L3242.6 878 L3243.2 895.6 L3243.9 913.4 L3244.5 931.2 L3245.1 949.2 L3245.8 967.2 L3246.4 985.2 L3247.1 1003.3 L3247.7 1021.4 L3248.4 1039.5 L3249 1057.6 L3249.6 1075.7 L3250.3 1093.8 L3250.9 1111.8 L3251.6 1129.8 L3252.2 1147.8 L3252.8 1165.6 L3253.5 1183.4 L3254.1 1201 L3254.8 1218.6 L3255.4 1236 L3256.1 1253.3 L3256.7 1270.5 L3257.3 1287.5 L3258 1304.3 L3258.6 1321 L3259.3 1337.4 L3259.9 1353.7 L3260.5 1369.7 L3261.2 1385.5 L3261.8 1401.1 L3262.5 1416.4 L3263.1 1431.5 L3263.8 1446.2 L3264.4 1460.8 L3265 1475 L3265.7 1488.9 L3266.3 1502.5 L3267 1515.8 L3267.6 1528.8 L3268.3 1541.5 L3268.9 1553.8 L3269.5 1565.7 L3270.2 1577.3 L3270.8 1588.5 L3271.5 1599.3 L3272.1 1609.8 L3272.7 1619.9 L3273.4 1629.5 L3274 1638.8 L3274.7 1647.6 L3275.3 1656.1 L3276 1664.1 L3276.6 1671.7 L3277.2 1678.8 L3277.9 1685.5 L3278.5 1691.8 L3279.2 1697.6 L3279.8 1703 L3280.5 1707.9 L3281.1 1712.4 L3281.7 1716.4 L3282.4 1719.9 L3283 1723 L3283.7 1725.6 L3284.3 1727.7 L3284.9 1729.4 L3285.6 1730.6 L3286.2 1731.3 L3286.9 1731.5 L3287.5 1731.3 L3288.2 1730.6 L3288.8 1729.4 L3289.4 1727.7 L3290.1 1725.6 L3290.7 1723 L3291.4 1719.9 L3292 1716.4 L3292.7 1712.4 L3293.3 1707.9 L3293.9 1703 L3294.6 1697.6 L3295.2 1691.8 L3295.9 1685.5 L3296.5 1678.8 L3297.1 1671.7 L3297.8 1664.1 L3298.4 1656.1 L3299.1 1647.6 L3299.7 1638.8 L3300.4 1629.5 L3301 1619.9 L3301.6 1609.8 L3302.3 1599.3 L3302.9 1588.5 L3303.6 1577.3 L3304.2 1565.7 L3304.9 1553.8 L3305.5 1541.5 L3306.1 1528.8 L3306.8 1515.8 L3307.4 1502.5 L3308.1 1488.9 L3308.7 1475 L3309.3 1460.8 L3310 1446.2 L3310.6 1431.5 L3311.3 1416.4 L3311.9 1401.1 L3312.6 1385.5 L3313.2 1369.7 L3313.8 1353.7 L3314.5 1337.4 L3315.1 1321 L3315.8 1304.3 L3316.4 1287.5 L3317.1 1270.5 L3317.7 1253.3 L3318.3 1236 L3319 1218.6 L3319.6 1201 L3320.3 1183.4 L3320.9 1165.6 L3321.5 1147.8 L3322.2 1129.8 L3322.8 1111.8 L3323.5 1093.8 L3324.1 1075.7 L3324.8 1057.6 L3325.4 1039.5" stroke="#27f12e" stroke-width="3.2" fill="none"/>
<path d="M1784.4 1039.5 L1785 1057.6 L1785.7 1075.7 L1786.3 1093.8 L1787 1111.8 L1787.6 1129.8 L1788.3 1147.8 L1788.9 1165.6 L1789.5 1183.4 L1790.2 1201 L1790.8 1218.6 L1791.5 1236 L1792.1 1253.3 L1792.7 1270.5 L1793.4 1287.5 L1794 1304.3 L1794.7 1321 L1795.3 1337.4 L1796 1353.7 L1796.6 1369.7 L1797.2 1385.5 L1797.9 1401.1 L1798.5 1416.4 L1799.2 1431.5 L1799.8 1446.2 L1800.5 1460.8 L1801.1 1475 L1801.7 1488.9 L1802.4 1502.5 L1803 1515.8 L1803.7 1528.8 L1804.3 1541.5 L1804.9 1553.8 L1805.6 1565.7 L1806.2 1577.3 L1806.9 1588.5 L1807.5 1599.3 L1808.2 1609.8 L1808.8 1619.9 L1809.4 1629.5 L1810.1 1638.8 L1810.7 1647.6 L1811.4 1656.1 L1812 1664.1 L1812.7 1671.7 L1813.3 1678.8 L1813.9 1685.5 L1814.6 1691.8 L1815.2 1697.6 L1815.9 1703 L1816.5 1707.9 L1817.1 1712.4 L1817.8 1716.4 L1818.4 1719.9 L1819.1 1723 L1819.7 1725.6 L1820.4 1727.7 L1821 1729.4 L1821.6 1730.6 L1822.3 1731.3 L1822.9 1731.5 L1823.6 1731.3 L1824.2 1730.6 L1824.9 1729.4 L1825.5 1727.7 L1826.1 1725.6 L1826.8 1723 L1827.4 1719.9 L1828.1 1716.4 L1828.7 1712.4 L1829.3 1707.9 L1830 1703 L1830.6 1697.6 L1831.3 1691.8 L1831.9 1685.5 L1832.6 1678.8 L1833.2 1671.7 L1833.8 1664.1 L1834.5 1656.1 L1835.1 1647.6 L1835.8 1638.8 L1836.4 1629.5 L1837.1 1619.9 L1837.7 1609.8 L1838.3 1599.3 L1839 1588.5 L1839.6 1577.3 L1840.3 1565.7 L1840.9 1553.8 L1841.5 1541.5 L1842.2 1528.8 L1842.8 1515.8 L1843.5 1502.5 L1844.1 1488.9 L1844.8 1475 L1845.4 1460.8 L1846 1446.2 L1846.7 1431.5 L1847.3 1416.4 L1848 1401.1 L1848.6 1385.5 L1849.3 1369.7 L1849.9 1353.7 L1850.5 1337.4 L1851.2 1321 L1851.8 1304.3 L1852.5 1287.5 L1853.1 1270.5 L1853.7 1253.3 L1854.4 1236 L1855 1218.6 L1855.7 1201 L1856.3 1183.4 L1857 1165.6 L1857.6 1147.8 L1858.2 1129.8 L1858.9 1111.8 L1859.5 1093.8 L1860.2 1075.7 L1860.8 1057.6 L1861.5 1039.5 L1862.1 1021.4 L1862.7 1003.3 L1863.4 985.2 L1864 967.2 L1864.7 949.2 L1865.3 931.2 L1865.9 913.4 L1866.6 895.6 L1867.2 878 L1867.9 860.4 L1868.5 843 L1869.2 825.7 L1869.8 808.5 L1870.4 791.5 L1871.1 774.7 L1871.7 758 L1872.4 741.6 L1873 725.3 L1873.6 709.3 L1874.3 693.5 L1874.9 677.9 L1875.6 662.6 L1876.2 647.5 L1876.9 632.8 L1877.5 618.2 L1878.1 604 L1878.8 590.1 L1879.4 576.5 L1880.1 563.2 L1880.7 550.2 L1881.4 537.5 L1882 525.2 L1882.6 513.3 L1883.3 501.7 L1883.9 490.5 L1884.6 479.7 L1885.2 469.2 L1885.8 459.1 L1886.5 449.5 L1887.1 440.2 L1887.8 431.4 L1888.4 422.9 L1889.1 414.9 L1889.7 407.3 L1890.3 400.2 L1891 393.5 L1891.6 387.2 L1892.3 381.4 L1892.9 376 L1893.6 371.1 L1894.2 366.6 L1894.8 362.6 L1895.5 359.1 L1896.1 356 L1896.8 353.4 L1897.4 351.3 L1898 349.6 L1898.7 348.4 L1899.3 347.7 L1900 347.5 L1900.6 347.7 L1901.3 348.4 L1901.9 349.6 L1902.5 351.3 L1903.2 353.4 L1903.8 356 L1904.5 359.1 L1905.1 362.6 L1905.8 366.6 L1906.4 371.1 L1907 376 L1907.7 381.4 L1908.3 387.2 L1909 393.5 L1909.6 400.2 L1910.2 407.3 L1910.9 414.9 L1911.5 422.9 L1912.2 431.4 L1912.8 440.2 L1913.5 449.5 L1914.1 459.1 L1914.7 469.2 L1915.4 479.7 L1916 490.5 L1916.7 501.7 L1917.3 513.3 L1918 525.2 L1918.6 537.5 L1919.2 550.2 L1919.9 563.2 L1920.5 576.5 L1921.2 590.1 L1921.8 604 L1922.4 618.2 L1923.1 632.8 L1923.7 647.5 L1924.4 662.6 L1925 677.9 L1925.7 693.5 L1926.3 709.3 L1926.9 725.3 L1927.6 741.6 L1928.2 758 L1928.9 774.7 L1929.5 791.5 L1930.2 808.5 L1930.8 825.7 L1931.4 843 L1932.1 860.4 L1932.7 878 L1933.4 895.6 L1934 913.4 L1934.6 931.2 L1935.3 949.2 L1935.9 967.2 L1936.6 985.2 L1937.2 1003.3 L1937.9 1021.4 L1938.5 1039.5 L1939.1 1057.6 L1939.8 1075.7 L1940.4 1093.8 L1941.1 1111.8 L1941.7 1129.8 L1942.4 1147.8 L1943 1165.6 L1943.6 1183.4 L1944.3 1201 L1944.9 1218.6 L1945.6 1236 L1946.2 1253.3 L1946.8 1270.5 L1947.5 1287.5 L1948.1 1304.3 L1948.8 1321 L1949.4 1337.4 L1950.1 1353.7 L1950.7 1369.7 L1951.3 1385.5 L1952 1401.1 L1952.6 1416.4 L1953.3 1431.5 L1953.9 1446.2 L1954.6 1460.8 L1955.2 1475 L1955.8 1488.9 L1956.5 1502.5 L1957.1 1515.8 L1957.8 1528.8 L1958.4 1541.5 L1959 1553.8 L1959.7 1565.7 L1960.3 1577.3 L1961 1588.5 L1961.6 1599.3 L1962.3 1609.8 L1962.9 1619.9 L1963.5 1629.5 L1964.2 1638.8 L1964.8 1647.6 L1965.5 1656.1 L1966.1 1664.1 L1966.8 1671.7 L1967.4 1678.8 L1968 1685.5 L1968.7 1691.8 L1969.3 1697.6 L1970 1703 L1970.6 1707.9 L1971.2 1712.4 L1971.9 1716.4 L1972.5 1719.9 L1973.2 1723 L1973.8 1725.6 L1974.5 1727.7 L1975.1 1729.4 L1975.7 1730.6 L1976.4 1731.3 L1977 1731.5 L1977.7 1731.3 L1978.3 1730.6 L1979 1729.4 L1979.6 1727.7 L1980.2 1725.6 L1980.9 1723 L1981.5 1719.9 L1982.2 1716.4 L1982.8 1712.4 L1983.4 1707.9 L1984.1 1703 L1984.7 1697.6 L1985.4 1691.8 L1986 1685.5 L1986.7 1678.8 L1987.3 1671.7 L1987.9 1664.1 L1988.6 1656.1 L1989.2 1647.6 L1989.9 1638.8 L1990.5 1629.5 L1991.2 1619.9 L1991.8 1609.8 L1992.4 1599.3 L1993.1 1588.5 L1993.7 1577.3 L1994.4 1565.7 L1995 1553.8 L1995.6 1541.5 L1996.3 1528.8 L1996.9 1515.8 L1997.6 1502.5 L1998.2 1488.9 L1998.9 1475 L1999.5 1460.8 L2000.1 1446.2 L2000.8 1431.5 L2001.4 1416.4 L2002.1 1401.1 L2002.7 1385.5 L2003.4 1369.7 L2004 1353.7 L2004.6 1337.4 L2005.3 1321 L2005.9 1304.3 L2006.6 1287.5 L2007.2 1270.5 L2007.8 1253.3 L2008.5 1236 L2009.1 1218.6 L2009.8 1201 L2010.4 1183.4 L2011.1 1165.6 L2011.7 1147.8 L2012.3 1129.8 L2013 1111.8 L2013.6 1093.8 L2014.3 1075.7 L2014.9 1057.6 L2015.6 1039.5 L2016.2 1021.4 L2016.8 1003.3 L2017.5 985.2 L2018.1 967.2 L2018.8 949.2 L2019.4 931.2 L2020 913.4 L2020.7 895.6 L2021.3 878 L2022 860.4 L2022.6 843 L2023.3 825.7 L2023.9 808.5 L2024.5 791.5 L2025.2 774.7 L2025.8 758 L2026.5 741.6 L2027.1 725.3 L2027.7 709.3 L2028.4 693.5 L2029 677.9 L2029.7 662.6 L2030.3 647.5 L2031 632.8 L2031.6 618.2 L2032.2 604 L2032.9 590.1 L2033.5 576.5 L2034.2 563.2 L2034.8 550.2 L2035.5 537.5 L2036.1 525.2 L2036.7 513.3 L2037.4 501.7 L2038 490.5 L2038.7 479.7 L2039.3 469.2 L2039.9 459.1 L2040.6 449.5 L2041.2 440.2 L2041.9 431.4 L2042.5 422.9 L2043.2 414.9 L2043.8 407.3 L2044.4 400.2 L2045.1 393.5 L2045.7 387.2 L2046.4 381.4 L2047 376 L2047.7 371.1 L2048.3 366.6 L2048.9 362.6 L2049.6 359.1 L2050.2 356 L2050.9 353.4 L2051.5 351.3 L2052.1 349.6 L2052.8 348.4 L2053.4 347.7 L2054.1 347.5 L2054.7 347.7 L2055.4 348.4 L2056 349.6 L2056.6 351.3 L2057.3 353.4 L2057.9 356 L2058.6 359.1 L2059.2 362.6 L2059.9 366.6 L2060.5 371.1 L2061.1 376 L2061.8 381.4 L2062.4 387.2 L2063.1 393.5 L2063.7 400.2 L2064.3 407.3 L2065 414.9 L2065.6 422.9 L2066.3 431.4 L2066.9 440.2 L2067.6 449.5 L2068.2 459.1 L2068.8 469.2 L2069.5 479.7 L2070.1 490.5 L2070.8 501.7 L2071.4 513.3 L2072.1 525.2 L2072.7 537.5 L2073.3 550.2 L2074 563.2 L2074.6 576.5 L2075.3 590.1 L2075.9 604 L2076.5 618.2 L2077.2 632.8 L2077.8 647.5 L2078.5 662.6 L2079.1 677.9 L2079.8 693.5 L2080.4 709.3 L2081 725.3 L2081.7 741.6 L2082.3 758 L2083 774.7 L2083.6 791.5 L2084.3 808.5 L2084.9 825.7 L2085.5 843 L2086.2 860.4 L2086.8 878 L2087.5 895.6 L2088.1 913.4 L2088.7 931.2 L2089.4 949.2 L2090 967.2 L2090.7 985.2 L2091.3 1003.3 L2092 1021.4 L2092.6 1039.5 L2093.2 1057.6 L2093.9 1075.7 L2094.5 1093.8 L2095.2 1111.8 L2095.8 1129.8 L2096.5 1147.8 L2097.1 1165.6 L2097.7 1183.4 L2098.4 1201 L2099 1218.6 L2099.7 1236 L2100.3 1253.3 L2100.9 1270.5 L2101.6 1287.5 L2102.2 1304.3 L2102.9 1321 L2103.5 1337.4 L2104.2 1353.7 L2104.8 1369.7 L2105.4 1385.5 L2106.1 1401.1 L2106.7 1416.4 L2107.4 1431.5 L2108 1446.2 L2108.7 1460.8 L2109.3 1475 L2109.9 1488.9 L2110.6 1502.5 L2111.2 1515.8 L2111.9 1528.8 L2112.5 1541.5 L2113.1 1553.8 L2113.8 1565.7 L2114.4 1577.3 L2115.1 1588.5 L2115.7 1599.3 L2116.4 1609.8 L2117 1619.9 L2117.6 1629.5 L2118.3 1638.8 L2118.9 1647.6 L2119.6 1656.1 L2120.2 1664.1 L2120.9 1671.7 L2121.5 1678.8 L2122.1 1685.5 L2122.8 1691.8 L2123.4 1697.6 L2124.1 1703 L2124.7 1707.9 L2125.3 1712.4 L2126 1716.4 L2126.6 1719.9 L2127.3 1723 L2127.9 1725.6 L2128.6 1727.7 L2129.2 1729.4 L2129.8 1730.6 L2130.5 1731.3 L2131.1 1731.5 L2131.8 1731.3 L2132.4 1730.6 L2133.1 1729.4 L2133.7 1727.7 L2134.3 1725.6 L2135 1723 L2135.6 1719.9 L2136.3 1716.4 L2136.9 1712.4 L2137.5 1707.9 L2138.2 1703 L2138.8 1697.6 L2139.5 1691.8 L2140.1 1685.5 L2140.8 1678.8 L2141.4 1671.7 L2142 1664.1 L2142.7 1656.1 L2143.3 1647.6 L2144 1638.8 L2144.6 1629.5 L2145.3 1619.9 L2145.9 1609.8 L2146.5 1599.3 L2147.2 1588.5 L2147.8 1577.3 L2148.5 1565.7 L2149.1 1553.8 L2149.7 1541.5 L2150.4 1528.8 L2151 1515.8 L2151.7 1502.5 L2152.3 1488.9 L2153 1475 L2153.6 1460.8 L2154.2 1446.2 L2154.9 1431.5 L2155.5 1416.4 L2156.2 1401.1 L2156.8 1385.5 L2157.5 1369.7 L2158.1 1353.7 L2158.7 1337.4 L2159.4 1321 L2160 1304.3 L2160.7 1287.5 L2161.3 1270.5 L2161.9 1253.3 L2162.6 1236 L2163.2 1218.6 L2163.9 1201 L2164.5 1183.4 L2165.2 1165.6 L2165.8 1147.8 L2166.4 1129.8 L2167.1 1111.8 L2167.7 1093.8 L2168.4 1075.7 L2169 1057.6 L2169.7 1039.5 L2170.3 1021.4 L2170.9 1003.3 L2171.6 985.2 L2172.2 967.2 L2172.9 949.2 L2173.5 931.2 L2174.1 913.4 L2174.8 895.6 L2175.4 878 L2176.1 860.4 L2176.7 843 L2177.4 825.7 L2178 808.5 L2178.6 791.5 L2179.3 774.7 L2179.9 758 L2180.6 741.6 L2181.2 725.3 L2181.8 709.3 L2182.5 693.5 L2183.1 677.9 L2183.8 662.6 L2184.4 647.5 L2185.1 632.8 L2185.7 618.2 L2186.3 604 L2187 590.1 L2187.6 576.5 L2188.3 563.2 L2188.9 550.2 L2189.6 537.5 L2190.2 525.2 L2190.8 513.3 L2191.5 501.7 L2192.1 490.5 L2192.8 479.7 L2193.4 469.2 L2194 459.1 L2194.7 449.5 L2195.3 440.2 L2196 431.4 L2196.6 422.9 L2197.3 414.9 L2197.9 407.3 L2198.5 400.2 L2199.2 393.5 L2199.8 387.2 L2200.5 381.4 L2201.1 376 L2201.8 371.1 L2202.4 366.6 L2203 362.6 L2203.7 359.1 L2204.3 356 L2205 353.4 L2205.6 351.3 L2206.2 349.6 L2206.9 348.4 L2207.5 347.7 L2208.2 347.5 L2208.8 347.7 L2209.5 348.4 L2210.1 349.6 L2210.7 351.3 L2211.4 353.4 L2212 356 L2212.7 359.1 L2213.3 362.6 L2214 366.6 L2214.6 371.1 L2215.2 376 L2215.9 381.4 L2216.5 387.2 L2217.2 393.5 L2217.8 400.2 L2218.4 407.3 L2219.1 414.9 L2219.7 422.9 L2220.4 431.4 L2221 440.2 L2221.7 449.5 L2222.3 459.1 L2222.9 469.2 L2223.6 479.7 L2224.2 490.5 L2224.9 501.7 L2225.5 513.3 L2226.2 525.2 L2226.8 537.5 L2227.4 550.2 L2228.1 563.2 L2228.7 576.5 L2229.4 590.1 L2230 604 L2230.6 618.2 L2231.3 632.8 L2231.9 647.5 L2232.6 662.6 L2233.2 677.9 L2233.9 693.5 L2234.5 709.3 L2235.1 725.3 L2235.8 741.6 L2236.4 758 L2237.1 774.7 L2237.7 791.5 L2238.4 808.5 L2239 825.7 L2239.6 843 L2240.3 860.4 L2240.9 878 L2241.6 895.6 L2242.2 913.4 L2242.8 931.2 L2243.5 949.2 L2244.1 967.2 L2244.8 985.2 L2245.4 1003.3 L2246.1 1021.4 L2246.7 1039.5 L2247.3 1057.6 L2248 1075.7 L2248.6 1093.8 L2249.3 1111.8 L2249.9 1129.8 L2250.6 1147.8 L2251.2 1165.6 L2251.8 1183.4 L2252.5 1201 L2253.1 1218.6 L2253.8 1236 L2254.4 1253.3 L2255 1270.5 L2255.7 1287.5 L2256.3 1304.3 L2257 1321 L2257.6 1337.4 L2258.3 1353.7 L2258.9 1369.7 L2259.5 1385.5 L2260.2 1401.1 L2260.8 1416.4 L2261.5 1431.5 L2262.1 1446.2 L2262.8 1460.8 L2263.4 1475 L2264 1488.9 L2264.7 1502.5 L2265.3 1515.8 L2266 1528.8 L2266.6 1541.5 L2267.2 1553.8 L2267.9 1565.7 L2268.5 1577.3 L2269.2 1588.5 L2269.8 1599.3 L2270.5 1609.8 L2271.1 1619.9 L2271.7 1629.5 L2272.4 1638.8 L2273 1647.6 L2273.7 1656.1 L2274.3 1664.1 L2275 1671.7 L2275.6 1678.8 L2276.2 1685.5 L2276.9 1691.8 L2277.5 1697.6 L2278.2 1703 L2278.8 1707.9 L2279.4 1712.4 L2280.1 1716.4 L2280.7 1719.9 L2281.4 1723 L2282 1725.6 L2282.7 1727.7 L2283.3 1729.4 L2283.9 1730.6 L2284.6 1731.3 L2285.2 1731.5 L2285.9 1731.3 L2286.5 1730.6 L2287.2 1729.4 L2287.8 1727.7 L2288.4 1725.6 L2289.1 1723 L2289.7 1719.9 L2290.4 1716.4 L2291 1712.4 L2291.6 1707.9 L2292.3 1703 L2292.9 1697.6 L2293.6 1691.8 L2294.2 1685.5 L2294.9 1678.8 L2295.5 1671.7 L2296.1 1664.1 L2296.8 1656.1 L2297.4 1647.6 L2298.1 1638.8 L2298.7 1629.5 L2299.4 1619.9 L2300 1609.8 L2300.6 1599.3 L2301.3 1588.5 L2301.9 1577.3 L2302.6 1565.7 L2303.2 1553.8 L2303.8 1541.5 L2304.5 1528.8 L2305.1 1515.8 L2305.8 1502.5 L2306.4 1488.9 L2307.1 1475 L2307.7 1460.8 L2308.3 1446.2 L2309 1431.5 L2309.6 1416.4 L2310.3 1401.1 L2310.9 1385.5 L2311.6 1369.7 L2312.2 1353.7 L2312.8 1337.4 L2313.5 1321 L2314.1 1304.3 L2314.8 1287.5 L2315.4 1270.5 L2316 1253.3 L2316.7 1236 L2317.3 1218.6 L2318 1201 L2318.6 1183.4 L2319.3 1165.6 L2319.9 1147.8 L2320.5 1129.8 L2321.2 1111.8 L2321.8 1093.8 L2322.5 1075.7 L2323.1 1057.6 L2323.8 1039.5 L2324.4 1021.4 L2325 1003.3 L2325.7 985.2 L2326.3 967.2 L2327 949.2 L2327.6 931.2 L2328.2 913.4 L2328.9 895.6 L2329.5 878 L2330.2 860.4 L2330.8 843 L2331.5 825.7 L2332.1 808.5 L2332.7 791.5 L2333.4 774.7 L2334 758 L2334.7 741.6 L2335.3 725.3 L2335.9 709.3 L2336.6 693.5 L2337.2 677.9 L2337.9 662.6 L2338.5 647.5 L2339.2 632.8 L2339.8 618.2 L2340.4 604 L2341.1 590.1 L2341.7 576.5 L2342.4 563.2 L2343 550.2 L2343.7 537.5 L2344.3 525.2 L2344.9 513.3 L2345.6 501.7 L2346.2 490.5 L2346.9 479.7 L2347.5 469.2 L2348.1 459.1 L2348.8 449.5 L2349.4 440.2 L2350.1 431.4 L2350.7 422.9 L2351.4 414.9 L2352 407.3 L2352.6 400.2 L2353.3 393.5 L2353.9 387.2 L2354.6 381.4 L2355.2 376 L2355.9 371.1 L2356.5 366.6 L2357.1 362.6 L2357.8 359.1 L2358.4 356 L2359.1 353.4 L2359.7 351.3 L2360.3 349.6 L2361 348.4 L2361.6 347.7 L2362.3 347.5 L2362.9 347.7 L2363.6 348.4 L2364.2 349.6 L2364.8 351.3 L2365.5 353.4 L2366.1 356 L2366.8 359.1 L2367.4 362.6 L2368.1 366.6 L2368.7 371.1 L2369.3 376 L2370 381.4 L2370.6 387.2 L2371.3 393.5 L2371.9 400.2 L2372.5 407.3 L2373.2 414.9 L2373.8 422.9 L2374.5 431.4 L2375.1 440.2 L2375.8 449.5 L2376.4 459.1 L2377 469.2 L2377.7 479.7 L2378.3 490.5 L2379 501.7 L2379.6 513.3 L2380.3 525.2 L2380.9 537.5 L2381.5 550.2 L2382.2 563.2 L2382.8 576.5 L2383.5 590.1 L2384.1 604 L2384.7 618.2 L2385.4 632.8 L2386 647.5 L2386.7 662.6 L2387.3 677.9 L2388 693.5 L2388.6 709.3 L2389.2 725.3 L2389.9 741.6 L2390.5 758 L2391.2 774.7 L2391.8 791.5 L2392.5 808.5 L2393.1 825.7 L2393.7 843 L2394.4 860.4 L2395 878 L2395.7 895.6 L2396.3 913.4 L2396.9 931.2 L2397.6 949.2 L2398.2 967.2 L2398.9 985.2 L2399.5 1003.3 L2400.2 1021.4 L2400.8 1039.5 L2401.4 1057.6 L2402.1 1075.7 L2402.7 1093.8 L2403.4 1111.8 L2404 1129.8 L2404.7 1147.8 L2405.3 1165.6 L2405.9 1183.4 L2406.6 1201 L2407.2 1218.6 L2407.9 1236 L2408.5 1253.3 L2409.1 1270.5 L2409.8 1287.5 L2410.4 1304.3 L2411.1 1321 L2411.7 1337.4 L2412.4 1353.7 L2413 1369.7 L2413.6 1385.5 L2414.3 1401.1 L2414.9 1416.4 L2415.6 1431.5 L2416.2 1446.2 L2416.9 1460.8 L2417.5 1475 L2418.1 1488.9 L2418.8 1502.5 L2419.4 1515.8 L2420.1 1528.8 L2420.7 1541.5 L2421.3 1553.8 L2422 1565.7 L2422.6 1577.3 L2423.3 1588.5 L2423.9 1599.3 L2424.6 1609.8 L2425.2 1619.9 L2425.8 1629.5 L2426.5 1638.8 L2427.1 1647.6 L2427.8 1656.1 L2428.4 1664.1 L2429.1 1671.7 L2429.7 1678.8 L2430.3 1685.5 L2431 1691.8 L2431.6 1697.6 L2432.3 1703 L2432.9 1707.9 L2433.5 1712.4 L2434.2 1716.4 L2434.8 1719.9 L2435.5 1723 L2436.1 1725.6 L2436.8 1727.7 L2437.4 1729.4 L2438 1730.6 L2438.7 1731.3 L2439.3 1731.5 L2440 1731.3 L2440.6 1730.6 L2441.3 1729.4 L2441.9 1727.7 L2442.5 1725.6 L2443.2 1723 L2443.8 1719.9 L2444.5 1716.4 L2445.1 1712.4 L2445.7 1707.9 L2446.4 1703 L2447 1697.6 L2447.7 1691.8 L2448.3 1685.5 L2449 1678.8 L2449.6 1671.7 L2450.2 1664.1 L2450.9 1656.1 L2451.5 1647.6 L2452.2 1638.8 L2452.8 1629.5 L2453.5 1619.9 L2454.1 1609.8 L2454.7 1599.3 L2455.4 1588.5 L2456 1577.3 L2456.7 1565.7 L2457.3 1553.8 L2457.9 1541.5 L2458.6 1528.8 L2459.2 1515.8 L2459.9 1502.5 L2460.5 1488.9 L2461.2 1475 L2461.8 1460.8 L2462.4 1446.2 L2463.1 1431.5 L2463.7 1416.4 L2464.4 1401.1 L2465 1385.5 L2465.7 1369.7 L2466.3 1353.7 L2466.9 1337.4 L2467.6 1321 L2468.2 1304.3 L2468.9 1287.5 L2469.5 1270.5 L2470.1 1253.3 L2470.8 1236 L2471.4 1218.6 L2472.1 1201 L2472.7 1183.4 L2473.4 1165.6 L2474 1147.8 L2474.6 1129.8 L2475.3 1111.8 L2475.9 1093.8 L2476.6 1075.7 L2477.2 1057.6 L2477.8 1039.5 L2478.5 1021.4 L2479.1 1003.3 L2479.8 985.2 L2480.4 967.2 L2481.1 949.2 L2481.7 931.2 L2482.3 913.4 L2483 895.6 L2483.6 878 L2484.3 860.4 L2484.9 843 L2485.6 825.7 L2486.2 808.5 L2486.8 791.5 L2487.5 774.7 L2488.1 758 L2488.8 741.6 L2489.4 725.3 L2490 709.3 L2490.7 693.5 L2491.3 677.9 L2492 662.6 L2492.6 647.5 L2493.3 632.8 L2493.9 618.2 L2494.5 604 L2495.2 590.1 L2495.8 576.5 L2496.5 563.2 L2497.1 550.2 L2497.8 537.5 L2498.4 525.2 L2499 513.3 L2499.7 501.7 L2500.3 490.5 L2501 479.7 L2501.6 469.2 L2502.2 459.1 L2502.9 449.5 L2503.5 440.2 L2504.2 431.4 L2504.8 422.9 L2505.5 414.9 L2506.1 407.3 L2506.7 400.2 L2507.4 393.5 L2508 387.2 L2508.7 381.4 L2509.3 376 L2510 371.1 L2510.6 366.6 L2511.2 362.6 L2511.9 359.1 L2512.5 356 L2513.2 353.4 L2513.8 351.3 L2514.4 349.6 L2515.1 348.4 L2515.7 347.7 L2516.4 347.5 L2517 347.7 L2517.7 348.4 L2518.3 349.6 L2518.9 351.3 L2519.6 353.4 L2520.2 356 L2520.9 359.1 L2521.5 362.6 L2522.2 366.6 L2522.8 371.1 L2523.4 376 L2524.1 381.4 L2524.7 387.2 L2525.4 393.5 L2526 400.2 L2526.6 407.3 L2527.3 414.9 L2527.9 422.9 L2528.6 431.4 L2529.2 440.2 L2529.9 449.5 L2530.5 459.1 L2531.1 469.2 L2531.8 479.7 L2532.4 490.5 L2533.1 501.7 L2533.7 513.3 L2534.4 525.2 L2535 537.5 L2535.6 550.2 L2536.3 563.2 L2536.9 576.5 L2537.6 590.1 L2538.2 604 L2538.8 618.2 L2539.5 632.8 L2540.1 647.5 L2540.8 662.6 L2541.4 677.9 L2542.1 693.5 L2542.7 709.3 L2543.3 725.3 L2544 741.6 L2544.6 758 L2545.3 774.7 L2545.9 791.5 L2546.6 808.5 L2547.2 825.7 L2547.8 843 L2548.5 860.4 L2549.1 878 L2549.8 895.6 L2550.4 913.4 L2551 931.2 L2551.7 949.2 L2552.3 967.2 L2553 985.2 L2553.6 1003.3 L2554.3 1021.4 L2554.9 1039.5 L2555.5 1057.6 L2556.2 1075.7 L2556.8 1093.8 L2557.5 1111.8 L2558.1 1129.8 L2558.8 1147.8 L2559.4 1165.6 L2560 1183.4 L2560.7 1201 L2561.3 1218.6 L2562 1236 L2562.6 1253.3 L2563.2 1270.5 L2563.9 1287.5 L2564.5 1304.3 L2565.2 1321 L2565.8 1337.4 L2566.5 1353.7 L2567.1 1369.7 L2567.7 1385.5 L2568.4 1401.1 L2569 1416.4 L2569.7 1431.5 L2570.3 1446.2 L2571 1460.8 L2571.6 1475 L2572.2 1488.9 L2572.9 1502.5 L2573.5 1515.8 L2574.2 1528.8 L2574.8 1541.5 L2575.4 1553.8 L2576.1 1565.7 L2576.7 1577.3 L2577.4 1588.5 L2578 1599.3 L2578.7 1609.8 L2579.3 1619.9 L2579.9 1629.5 L2580.6 1638.8 L2581.2 1647.6 L2581.9 1656.1 L2582.5 1664.1 L2583.2 1671.7 L2583.8 1678.8 L2584.4 1685.5 L2585.1 1691.8 L2585.7 1697.6 L2586.4 1703 L2587 1707.9 L2587.6 1712.4 L2588.3 1716.4 L2588.9 1719.9 L2589.6 1723 L2590.2 1725.6 L2590.9 1727.7 L2591.5 1729.4 L2592.1 1730.6 L2592.8 1731.3 L2593.4 1731.5 L2594.1 1731.3 L2594.7 1730.6 L2595.4 1729.4 L2596 1727.7 L2596.6 1725.6 L2597.3 1723 L2597.9 1719.9 L2598.6 1716.4 L2599.2 1712.4 L2599.8 1707.9 L2600.5 1703 L2601.1 1697.6 L2601.8 1691.8 L2602.4 1685.5 L2603.1 1678.8 L2603.7 1671.7 L2604.3 1664.1 L2605 1656.1 L2605.6 1647.6 L2606.3 1638.8 L2606.9 1629.5 L2607.6 1619.9 L2608.2 1609.8 L2608.8 1599.3 L2609.5 1588.5 L2610.1 1577.3 L2610.8 1565.7 L2611.4 1553.8 L2612 1541.5 L2612.7 1528.8 L2613.3 1515.8 L2614 1502.5 L2614.6 1488.9 L2615.3 1475 L2615.9 1460.8 L2616.5 1446.2 L2617.2 1431.5 L2617.8 1416.4 L2618.5 1401.1 L2619.1 1385.5 L2619.8 1369.7 L2620.4 1353.7 L2621 1337.4 L2621.7 1321 L2622.3 1304.3 L2623 1287.5 L2623.6 1270.5 L2624.2 1253.3 L2624.9 1236 L2625.5 1218.6 L2626.2 1201 L2626.8 1183.4 L2627.5 1165.6 L2628.1 1147.8 L2628.7 1129.8 L2629.4 1111.8 L2630 1093.8 L2630.7 1075.7 L2631.3 1057.6 L2631.9 1039.5 L2632.6 1021.4 L2633.2 1003.3 L2633.9 985.2 L2634.5 967.2 L2635.2 949.2 L2635.8 931.2 L2636.4 913.4 L2637.1 895.6 L2637.7 878 L2638.4 860.4 L2639 843 L2639.7 825.7 L2640.3 808.5 L2640.9 791.5 L2641.6 774.7 L2642.2 758 L2642.9 741.6 L2643.5 725.3 L2644.1 709.3 L2644.8 693.5 L2645.4 677.9 L2646.1 662.6 L2646.7 647.5 L2647.4 632.8 L2648 618.2 L2648.6 604 L2649.3 590.1 L2649.9 576.5 L2650.6 563.2 L2651.2 550.2 L2651.9 537.5 L2652.5 525.2 L2653.1 513.3 L2653.8 501.7 L2654.4 490.5 L2655.1 479.7 L2655.7 469.2 L2656.3 459.1 L2657 449.5 L2657.6 440.2 L2658.3 431.4 L2658.9 422.9 L2659.6 414.9 L2660.2 407.3 L2660.8 400.2 L2661.5 393.5 L2662.1 387.2 L2662.8 381.4 L2663.4 376 L2664.1 371.1 L2664.7 366.6 L2665.3 362.6 L2666 359.1 L2666.6 356 L2667.3 353.4 L2667.9 351.3 L2668.5 349.6 L2669.2 348.4 L2669.8 347.7 L2670.5 347.5 L2671.1 347.7 L2671.8 348.4 L2672.4 349.6 L2673 351.3 L2673.7 353.4 L2674.3 356 L2675 359.1 L2675.6 362.6 L2676.3 366.6 L2676.9 371.1 L2677.5 376 L2678.2 381.4 L2678.8 387.2 L2679.5 393.5 L2680.1 400.2 L2680.7 407.3 L2681.4 414.9 L2682 422.9 L2682.7 431.4 L2683.3 440.2 L2684 449.5 L2684.6 459.1 L2685.2 469.2 L2685.9 479.7 L2686.5 490.5 L2687.2 501.7 L2687.8 513.3 L2688.5 525.2 L2689.1 537.5 L2689.7 550.2 L2690.4 563.2 L2691 576.5 L2691.7 590.1 L2692.3 604 L2692.9 618.2 L2693.6 632.8 L2694.2 647.5 L2694.9 662.6 L2695.5 677.9 L2696.2 693.5 L2696.8 709.3 L2697.4 725.3 L2698.1 741.6 L2698.7 758 L2699.4 774.7 L2700 791.5 L2700.7 808.5 L2701.3 825.7 L2701.9 843 L2702.6 860.4 L2703.2 878 L2703.9 895.6 L2704.5 913.4 L2705.1 931.2 L2705.8 949.2 L2706.4 967.2 L2707.1 985.2 L2707.7 1003.3 L2708.4 1021.4 L2709 1039.5 L2709.6 1057.6 L2710.3 1075.7 L2710.9 1093.8 L2711.6 1111.8 L2712.2 1129.8 L2712.9 1147.8 L2713.5 1165.6 L2714.1 1183.4 L2714.8 1201 L2715.4 1218.6 L2716.1 1236 L2716.7 1253.3 L2717.3 1270.5 L2718 1287.5 L2718.6 1304.3 L2719.3 1321 L2719.9 1337.4 L2720.6 1353.7 L2721.2 1369.7 L2721.8 1385.5 L2722.5 1401.1 L2723.1 1416.4 L2723.8 1431.5 L2724.4 1446.2 L2725.1 1460.8 L2725.7 1475 L2726.3 1488.9 L2727 1502.5 L2727.6 1515.8 L2728.3 1528.8 L2728.9 1541.5 L2729.5 1553.8 L2730.2 1565.7 L2730.8 1577.3 L2731.5 1588.5 L2732.1 1599.3 L2732.8 1609.8 L2733.4 1619.9 L2734 1629.5 L2734.7 1638.8 L2735.3 1647.6 L2736 1656.1 L2736.6 1664.1 L2737.3 1671.7 L2737.9 1678.8 L2738.5 1685.5 L2739.2 1691.8 L2739.8 1697.6 L2740.5 1703 L2741.1 1707.9 L2741.7 1712.4 L2742.4 1716.4 L2743 1719.9 L2743.7 1723 L2744.3 1725.6 L2745 1727.7 L2745.6 1729.4 L2746.2 1730.6 L2746.9 1731.3 L2747.5 1731.5 L2748.2 1731.3 L2748.8 1730.6 L2749.5 1729.4 L2750.1 1727.7 L2750.7 1725.6 L2751.4 1723 L2752 1719.9 L2752.7 1716.4 L2753.3 1712.4 L2753.9 1707.9 L2754.6 1703 L2755.2 1697.6 L2755.9 1691.8 L2756.5 1685.5 L2757.2 1678.8 L2757.8 1671.7 L2758.4 1664.1 L2759.1 1656.1 L2759.7 1647.6 L2760.4 1638.8 L2761 1629.5 L2761.7 1619.9 L2762.3 1609.8 L2762.9 1599.3 L2763.6 1588.5 L2764.2 1577.3 L2764.9 1565.7 L2765.5 1553.8 L2766.1 1541.5 L2766.8 1528.8 L2767.4 1515.8 L2768.1 1502.5 L2768.7 1488.9 L2769.4 1475 L2770 1460.8 L2770.6 1446.2 L2771.3 1431.5 L2771.9 1416.4 L2772.6 1401.1 L2773.2 1385.5 L2773.9 1369.7 L2774.5 1353.7 L2775.1 1337.4 L2775.8 1321 L2776.4 1304.3 L2777.1 1287.5 L2777.7 1270.5 L2778.3 1253.3 L2779 1236 L2779.6 1218.6 L2780.3 1201 L2780.9 1183.4 L2781.6 1165.6 L2782.2 1147.8 L2782.8 1129.8 L2783.5 1111.8 L2784.1 1093.8 L2784.8 1075.7 L2785.4 1057.6 L2786.1 1039.5 L2786.7 1021.4 L2787.3 1003.3 L2788 985.2 L2788.6 967.2 L2789.3 949.2 L2789.9 931.2 L2790.5 913.4 L2791.2 895.6 L2791.8 878 L2792.5 860.4 L2793.1 843 L2793.8 825.7 L2794.4 808.5 L2795 791.5 L2795.7 774.7 L2796.3 758 L2797 741.6 L2797.6 725.3 L2798.2 709.3 L2798.9 693.5 L2799.5 677.9 L2800.2 662.6 L2800.8 647.5 L2801.5 632.8 L2802.1 618.2 L2802.7 604 L2803.4 590.1 L2804 576.5 L2804.7 563.2 L2805.3 550.2 L2806 537.5 L2806.6 525.2 L2807.2 513.3 L2807.9 501.7 L2808.5 490.5 L2809.2 479.7 L2809.8 469.2 L2810.4 459.1 L2811.1 449.5 L2811.7 440.2 L2812.4 431.4 L2813 422.9 L2813.7 414.9 L2814.3 407.3 L2814.9 400.2 L2815.6 393.5 L2816.2 387.2 L2816.9 381.4 L2817.5 376 L2818.2 371.1 L2818.8 366.6 L2819.4 362.6 L2820.1 359.1 L2820.7 356 L2821.4 353.4 L2822 351.3 L2822.6 349.6 L2823.3 348.4 L2823.9 347.7 L2824.6 347.5 L2825.2 347.7 L2825.9 348.4 L2826.5 349.6 L2827.1 351.3 L2827.8 353.4 L2828.4 356 L2829.1 359.1 L2829.7 362.6 L2830.4 366.6 L2831 371.1 L2831.6 376 L2832.3 381.4 L2832.9 387.2 L2833.6 393.5 L2834.2 400.2 L2834.8 407.3 L2835.5 414.9 L2836.1 422.9 L2836.8 431.4 L2837.4 440.2 L2838.1 449.5 L2838.7 459.1 L2839.3 469.2 L2840 479.7 L2840.6 490.5 L2841.3 501.7 L2841.9 513.3 L2842.6 525.2 L2843.2 537.5 L2843.8 550.2 L2844.5 563.2 L2845.1 576.5 L2845.8 590.1 L2846.4 604 L2847 618.2 L2847.7 632.8 L2848.3 647.5 L2849 662.6 L2849.6 677.9 L2850.3 693.5 L2850.9 709.3 L2851.5 725.3 L2852.2 741.6 L2852.8 758 L2853.5 774.7 L2854.1 791.5 L2854.8 808.5 L2855.4 825.7 L2856 843 L2856.7 860.4 L2857.3 878 L2858 895.6 L2858.6 913.4 L2859.2 931.2 L2859.9 949.2 L2860.5 967.2 L2861.2 985.2 L2861.8 1003.3 L2862.5 1021.4 L2863.1 1039.5 L2863.7 1057.6 L2864.4 1075.7 L2865 1093.8 L2865.7 1111.8 L2866.3 1129.8 L2867 1147.8 L2867.6 1165.6 L2868.2 1183.4 L2868.9 1201 L2869.5 1218.6 L2870.2 1236 L2870.8 1253.3 L2871.4 1270.5 L2872.1 1287.5 L2872.7 1304.3 L2873.4 1321 L2874 1337.4 L2874.7 1353.7 L2875.3 1369.7 L2875.9 1385.5 L2876.6 1401.1 L2877.2 1416.4 L2877.9 1431.5 L2878.5 1446.2 L2879.2 1460.8 L2879.8 1475 L2880.4 1488.9 L2881.1 1502.5 L2881.7 1515.8 L2882.4 1528.8 L2883 1541.5 L2883.6 1553.8 L2884.3 1565.7 L2884.9 1577.3 L2885.6 1588.5 L2886.2 1599.3 L2886.9 1609.8 L2887.5 1619.9 L2888.1 1629.5 L2888.8 1638.8 L2889.4 1647.6 L2890.1 1656.1 L2890.7 1664.1 L2891.4 1671.7 L2892 1678.8 L2892.6 1685.5 L2893.3 1691.8 L2893.9 1697.6 L2894.6 1703 L2895.2 1707.9 L2895.8 1712.4 L2896.5 1716.4 L2897.1 1719.9 L2897.8 1723 L2898.4 1725.6 L2899.1 1727.7 L2899.7 1729.4 L2900.3 1730.6 L2901 1731.3 L2901.6 1731.5 L2902.3 1731.3 L2902.9 1730.6 L2903.6 1729.4 L2904.2 1727.7 L2904.8 1725.6 L2905.5 1723 L2906.1 1719.9 L2906.8 1716.4 L2907.4 1712.4 L2908 1707.9 L2908.7 1703 L2909.3 1697.6 L2910 1691.8 L2910.6 1685.5 L2911.3 1678.8 L2911.9 1671.7 L2912.5 1664.1 L2913.2 1656.1 L2913.8 1647.6 L2914.5 1638.8 L2915.1 1629.5 L2915.8 1619.9 L2916.4 1609.8 L2917 1599.3 L2917.7 1588.5 L2918.3 1577.3 L2919 1565.7 L2919.6 1553.8 L2920.2 1541.5 L2920.9 1528.8 L2921.5 1515.8 L2922.2 1502.5 L2922.8 1488.9 L2923.5 1475 L2924.1 1460.8 L2924.7 1446.2 L2925.4 1431.5 L2926 1416.4 L2926.7 1401.1 L2927.3 1385.5 L2928 1369.7 L2928.6 1353.7 L2929.2 1337.4 L2929.9 1321 L2930.5 1304.3 L2931.2 1287.5 L2931.8 1270.5 L2932.4 1253.3 L2933.1 1236 L2933.7 1218.6 L2934.4 1201 L2935 1183.4 L2935.7 1165.6 L2936.3 1147.8 L2936.9 1129.8 L2937.6 1111.8 L2938.2 1093.8 L2938.9 1075.7 L2939.5 1057.6 L2940.2 1039.5 L2940.8 1021.4 L2941.4 1003.3 L2942.1 985.2 L2942.7 967.2 L2943.4 949.2 L2944 931.2 L2944.6 913.4 L2945.3 895.6 L2945.9 878 L2946.6 860.4 L2947.2 843 L2947.9 825.7 L2948.5 808.5 L2949.1 791.5 L2949.8 774.7 L2950.4 758 L2951.1 741.6 L2951.7 725.3 L2952.3 709.3 L2953 693.5 L2953.6 677.9 L2954.3 662.6 L2954.9 647.5 L2955.6 632.8 L2956.2 618.2 L2956.8 604 L2957.5 590.1 L2958.1 576.5 L2958.8 563.2 L2959.4 550.2 L2960.1 537.5 L2960.7 525.2 L2961.3 513.3 L2962 501.7 L2962.6 490.5 L2963.3 479.7 L2963.9 469.2 L2964.5 459.1 L2965.2 449.5 L2965.8 440.2 L2966.5 431.4 L2967.1 422.9 L2967.8 414.9 L2968.4 407.3 L2969 400.2 L2969.7 393.5 L2970.3 387.2 L2971 381.4 L2971.6 376 L2972.3 371.1 L2972.9 366.6 L2973.5 362.6 L2974.2 359.1 L2974.8 356 L2975.5 353.4 L2976.1 351.3 L2976.7 349.6 L2977.4 348.4 L2978 347.7 L2978.7 347.5 L2979.3 347.7 L2980 348.4 L2980.6 349.6 L2981.2 351.3 L2981.9 353.4 L2982.5 356 L2983.2 359.1 L2983.8 362.6 L2984.5 366.6 L2985.1 371.1 L2985.7 376 L2986.4 381.4 L2987 387.2 L2987.7 393.5 L2988.3 400.2 L2988.9 407.3 L2989.6 414.9 L2990.2 422.9 L2990.9 431.4 L2991.5 440.2 L2992.2 449.5 L2992.8 459.1 L2993.4 469.2 L2994.1 479.7 L2994.7 490.5 L2995.4 501.7 L2996 513.3 L2996.7 525.2 L2997.3 537.5 L2997.9 550.2 L2998.6 563.2 L2999.2 576.5 L2999.9 590.1 L3000.5 604 L3001.1 618.2 L3001.8 632.8 L3002.4 647.5 L3003.1 662.6 L3003.7 677.9 L3004.4 693.5 L3005 709.3 L3005.6 725.3 L3006.3 741.6 L3006.9 758 L3007.6 774.7 L3008.2 791.5 L3008.9 808.5 L3009.5 825.7 L3010.1 843 L3010.8 860.4 L3011.4 878 L3012.1 895.6 L3012.7 913.4 L3013.3 931.2 L3014 949.2 L3014.6 967.2 L3015.3 985.2 L3015.9 1003.3 L3016.6 1021.4 L3017.2 1039.5 L3017.8 1057.6 L3018.5 1075.7 L3019.1 1093.8 L3019.8 1111.8 L3020.4 1129.8 L3021.1 1147.8 L3021.7 1165.6 L3022.3 1183.4 L3023 1201 L3023.6 1218.6 L3024.3 1236 L3024.9 1253.3 L3025.5 1270.5 L3026.2 1287.5 L3026.8 1304.3 L3027.5 1321 L3028.1 1337.4 L3028.8 1353.7 L3029.4 1369.7 L3030 1385.5 L3030.7 1401.1 L3031.3 1416.4 L3032 1431.5 L3032.6 1446.2 L3033.3 1460.8 L3033.9 1475 L3034.5 1488.9 L3035.2 1502.5 L3035.8 1515.8 L3036.5 1528.8 L3037.1 1541.5 L3037.7 1553.8 L3038.4 1565.7 L3039 1577.3 L3039.7 1588.5 L3040.3 1599.3 L3041 1609.8 L3041.6 1619.9 L3042.2 1629.5 L3042.9 1638.8 L3043.5 1647.6 L3044.2 1656.1 L3044.8 1664.1 L3045.5 1671.7 L3046.1 1678.8 L3046.7 1685.5 L3047.4 1691.8 L3048 1697.6 L3048.7 1703 L3049.3 1707.9 L3049.9 1712.4 L3050.6 1716.4 L3051.2 1719.9 L3051.9 1723 L3052.5 1725.6 L3053.2 1727.7 L3053.8 1729.4 L3054.4 1730.6 L3055.1 1731.3 L3055.7 1731.5 L3056.4 1731.3 L3057 1730.6 L3057.7 1729.4 L3058.3 1727.7 L3058.9 1725.6 L3059.6 1723 L3060.2 1719.9 L3060.9 1716.4 L3061.5 1712.4 L3062.1 1707.9 L3062.8 1703 L3063.4 1697.6 L3064.1 1691.8 L3064.7 1685.5 L3065.4 1678.8 L3066 1671.7 L3066.6 1664.1 L3067.3 1656.1 L3067.9 1647.6 L3068.6 1638.8 L3069.2 1629.5 L3069.9 1619.9 L3070.5 1609.8 L3071.1 1599.3 L3071.8 1588.5 L3072.4 1577.3 L3073.1 1565.7 L3073.7 1553.8 L3074.3 1541.5 L3075 1528.8 L3075.6 1515.8 L3076.3 1502.5 L3076.9 1488.9 L3077.6 1475 L3078.2 1460.8 L3078.8 1446.2 L3079.5 1431.5 L3080.1 1416.4 L3080.8 1401.1 L3081.4 1385.5 L3082.1 1369.7 L3082.7 1353.7 L3083.3 1337.4 L3084 1321 L3084.6 1304.3 L3085.3 1287.5 L3085.9 1270.5 L3086.5 1253.3 L3087.2 1236 L3087.8 1218.6 L3088.5 1201 L3089.1 1183.4 L3089.8 1165.6 L3090.4 1147.8 L3091 1129.8 L3091.7 1111.8 L3092.3 1093.8 L3093 1075.7 L3093.6 1057.6 L3094.2 1039.5 L3094.9 1021.4 L3095.5 1003.3 L3096.2 985.2 L3096.8 967.2 L3097.5 949.2 L3098.1 931.2 L3098.7 913.4 L3099.4 895.6 L3100 878 L3100.7 860.4 L3101.3 843 L3102 825.7 L3102.6 808.5 L3103.2 791.5 L3103.9 774.7 L3104.5 758 L3105.2 741.6 L3105.8 725.3 L3106.4 709.3 L3107.1 693.5 L3107.7 677.9 L3108.4 662.6 L3109 647.5 L3109.7 632.8 L3110.3 618.2 L3110.9 604 L3111.6 590.1 L3112.2 576.5 L3112.9 563.2 L3113.5 550.2 L3114.2 537.5 L3114.8 525.2 L3115.4 513.3 L3116.1 501.7 L3116.7 490.5 L3117.4 479.7 L3118 469.2 L3118.6 459.1 L3119.3 449.5 L3119.9 440.2 L3120.6 431.4 L3121.2 422.9 L3121.9 414.9 L3122.5 407.3 L3123.1 400.2 L3123.8 393.5 L3124.4 387.2 L3125.1 381.4 L3125.7 376 L3126.4 371.1 L3127 366.6 L3127.6 362.6 L3128.3 359.1 L3128.9 356 L3129.6 353.4 L3130.2 351.3 L3130.8 349.6 L3131.5 348.4 L3132.1 347.7 L3132.8 347.5 L3133.4 347.7 L3134.1 348.4 L3134.7 349.6 L3135.3 351.3 L3136 353.4 L3136.6 356 L3137.3 359.1 L3137.9 362.6 L3138.6 366.6 L3139.2 371.1 L3139.8 376 L3140.5 381.4 L3141.1 387.2 L3141.8 393.5 L3142.4 400.2 L3143 407.3 L3143.7 414.9 L3144.3 422.9 L3145 431.4 L3145.6 440.2 L3146.3 449.5 L3146.9 459.1 L3147.5 469.2 L3148.2 479.7 L3148.8 490.5 L3149.5 501.7 L3150.1 513.3 L3150.8 525.2 L3151.4 537.5 L3152 550.2 L3152.7 563.2 L3153.3 576.5 L3154 590.1 L3154.6 604 L3155.2 618.2 L3155.9 632.8 L3156.5 647.5 L3157.2 662.6 L3157.8 677.9 L3158.5 693.5 L3159.1 709.3 L3159.7 725.3 L3160.4 741.6 L3161 758 L3161.7 774.7 L3162.3 791.5 L3163 808.5 L3163.6 825.7 L3164.2 843 L3164.9 860.4 L3165.5 878 L3166.2 895.6 L3166.8 913.4 L3167.4 931.2 L3168.1 949.2 L3168.7 967.2 L3169.4 985.2 L3170 1003.3 L3170.7 1021.4 L3171.3 1039.5 L3171.9 1057.6 L3172.6 1075.7 L3173.2 1093.8 L3173.9 1111.8 L3174.5 1129.8 L3175.2 1147.8 L3175.8 1165.6 L3176.4 1183.4 L3177.1 1201 L3177.7 1218.6 L3178.4 1236 L3179 1253.3 L3179.6 1270.5 L3180.3 1287.5 L3180.9 1304.3 L3181.6 1321 L3182.2 1337.4 L3182.9 1353.7 L3183.5 1369.7 L3184.1 1385.5 L3184.8 1401.1 L3185.4 1416.4 L3186.1 1431.5 L3186.7 1446.2 L3187.4 1460.8 L3188 1475 L3188.6 1488.9 L3189.3 1502.5 L3189.9 1515.8 L3190.6 1528.8 L3191.2 1541.5 L3191.8 1553.8 L3192.5 1565.7 L3193.1 1577.3 L3193.8 1588.5 L3194.4 1599.3 L3195.1 1609.8 L3195.7 1619.9 L3196.3 1629.5 L3197 1638.8 L3197.6 1647.6 L3198.3 1656.1 L3198.9 1664.1 L3199.6 1671.7 L3200.2 1678.8 L3200.8 1685.5 L3201.5 1691.8 L3202.1 1697.6 L3202.8 1703 L3203.4 1707.9 L3204 1712.4 L3204.7 1716.4 L3205.3 1719.9 L3206 1723 L3206.6 1725.6 L3207.3 1727.7 L3207.9 1729.4 L3208.5 1730.6 L3209.2 1731.3 L3209.8 1731.5 L3210.5 1731.3 L3211.1 1730.6 L3211.8 1729.4 L3212.4 1727.7 L3213 1725.6 L3213.7 1723 L3214.3 1719.9 L3215 1716.4 L3215.6 1712.4 L3216.2 1707.9 L3216.9 1703 L3217.5 1697.6 L3218.2 1691.8 L3218.8 1685.5 L3219.5 1678.8 L3220.1 1671.7 L3220.7 1664.1 L3221.4 1656.1 L3222 1647.6 L3222.7 1638.8 L3223.3 1629.5 L3224 1619.9 L3224.6 1609.8 L3225.2 1599.3 L3225.9 1588.5 L3226.5 1577.3 L3227.2 1565.7 L3227.8 1553.8 L3228.4 1541.5 L3229.1 1528.8 L3229.7 1515.8 L3230.4 1502.5 L3231 1488.9 L3231.7 1475 L3232.3 1460.8 L3232.9 1446.2 L3233.6 1431.5 L3234.2 1416.4 L3234.9 1401.1 L3235.5 1385.5 L3236.2 1369.7 L3236.8 1353.7 L3237.4 1337.4 L3238.1 1321 L3238.7 1304.3 L3239.4 1287.5 L3240 1270.5 L3240.6 1253.3 L3241.3 1236 L3241.9 1218.6 L3242.6 1201 L3243.2 1183.4 L3243.9 1165.6 L3244.5 1147.8 L3245.1 1129.8 L3245.8 1111.8 L3246.4 1093.8 L3247.1 1075.7 L3247.7 1057.6 L3248.4 1039.5 L3249 1021.4 L3249.6 1003.3 L3250.3 985.2 L3250.9 967.2 L3251.6 949.2 L3252.2 931.2 L3252.8 913.4 L3253.5 895.6 L3254.1 878 L3254.8 860.4 L3255.4 843 L3256.1 825.7 L3256.7 808.5 L3257.3 791.5 L3258 774.7 L3258.6 758 L3259.3 741.6 L3259.9 725.3 L3260.5 709.3 L3261.2 693.5 L3261.8 677.9 L3262.5 662.6 L3263.1 647.5 L3263.8 632.8 L3264.4 618.2 L3265 604 L3265.7 590.1 L3266.3 576.5 L3267 563.2 L3267.6 550.2 L3268.3 537.5 L3268.9 525.2 L3269.5 513.3 L3270.2 501.7 L3270.8 490.5 L3271.5 479.7 L3272.1 469.2 L3272.7 459.1 L3273.4 449.5 L3274 440.2 L3274.7 431.4 L3275.3 422.9 L3276 414.9 L3276.6 407.3 L3277.2 400.2 L3277.9 393.5 L3278.5 387.2 L3279.2 381.4 L3279.8 376 L3280.5 371.1 L3281.1 366.6 L3281.7 362.6 L3282.4 359.1 L3283 356 L3283.7 353.4 L3284.3 351.3 L3284.9 349.6 L3285.6 348.4 L3286.2 347.7 L3286.9 347.5 L3287.5 347.7 L3288.2 348.4 L3288.8 349.6 L3289.4 351.3 L3290.1 353.4 L3290.7 356 L3291.4 359.1 L3292 362.6 L3292.7 366.6 L3293.3 371.1 L3293.9 376 L3294.6 381.4 L3295.2 387.2 L3295.9 393.5 L3296.5 400.2 L3297.1 407.3 L3297.8 414.9 L3298.4 422.9 L3299.1 431.4 L3299.7 440.2 L3300.4 449.5 L3301 459.1 L3301.6 469.2 L3302.3 479.7 L3302.9 490.5 L3303.6 501.7 L3304.2 513.3 L3304.9 525.2 L3305.5 537.5 L3306.1 550.2 L3306.8 563.2 L3307.4 576.5 L3308.1 590.1 L3308.7 604 L3309.3 618.2 L3310 632.8 L3310.6 647.5 L3311.3 662.6 L3311.9 677.9 L3312.6 693.5 L3313.2 709.3 L3313.8 725.3 L3314.5 741.6 L3315.1 758 L3315.8 774.7 L3316.4 791.5 L3317.1 808.5 L3317.7 825.7 L3318.3 843 L3319 860.4 L3319.6 878 L3320.3 895.6 L3320.9 913.4 L3321.5 931.2 L3322.2 949.2 L3322.8 967.2 L3323.5 985.2 L3324.1 1003.3 L3324.8 1021.4 L3325.4 1039.5" stroke="#0d24ff" stroke-width="3.2" fill="none"/>
<g font-family="Liberation Mono, monospace" font-size="27">
<text x="2167.5" y="199.5" text-anchor="middle" fill="#27f12e">V(nØØ4)</text>
<text x="2937.5" y="199.5" text-anchor="middle" fill="#1f2eff">V(nØØ7)</text>
</g>
</svg>
<div style="position:absolute;left:500px;top:1835px;width:2340px;height:96px;background:linear-gradient(rgba(0,0,0,0),rgba(0,0,0,0.04) 50%,rgba(0,0,0,0.12));-webkit-mask-image:linear-gradient(90deg,transparent 0,#000 160px,#000 2180px,transparent 100%)"></div><div id="dock"><svg style="position:absolute;left:23px;top:21px" width="101" height="101" viewBox="0 0 101 101" ><defs><linearGradient id="fb" x1="0" y1="0" x2="0" y2="1"><stop offset="0" stop-color="#2dcbfa"/><stop offset="1" stop-color="#1b6cf0"/></linearGradient><linearGradient id="fw" x1="0" y1="0" x2="0" y2="1"><stop offset="0" stop-color="#f4f5f7"/><stop offset="1" stop-color="#d9dee6"/></linearGradient></defs>
<rect x="0" y="0" width="101" height="101" rx="23" fill="url(#fw)"/>
<path d="M23 0 H55 Q44 22 42 56 H53 Q52 80 58 101 H23 Q0 101 0 78 V23 Q0 0 23 0Z" fill="url(#fb)"/>
<rect x="24.5" y="24" width="4" height="12" rx="2" fill="#1e2430"/><rect x="72.5" y="24" width="4" height="12" rx="2" fill="#1e2430"/>
<path d="M19 67 Q50 90 82 67" stroke="#1e2430" stroke-width="2.6" fill="none" stroke-linecap="round"/></svg><svg style="position:absolute;left:157px;top:21px" width="101" height="101" viewBox="0 0 101 101" ><defs><linearGradient id="sf" x1="0" y1="0" x2="0" y2="1"><stop offset="0" stop-color="#33a8f7"/><stop offset="1" stop-color="#1a72e6"/></linearGradient><linearGradient id="sw" x1="0" y1="0" x2="0" y2="1"><stop offset="0" stop-color="#ffffff"/><stop offset="1" stop-color="#e6e6e8"/></linearGradient></defs>
<rect width="101" height="101" rx="23" fill="url(#sw)"/><circle cx="50.5" cy="50.5" r="42.5" fill="url(#sf)"/>
<g stroke="#ffffff" stroke-width="1.1" opacity="0.85"><line x1="50.5" y1="12" x2="50.5" y2="19" transform="rotate(0.0 50.5 50.5)"/><line x1="50.5" y1="12" x2="50.5" y2="16" transform="rotate(7.5 50.5 50.5)"/><line x1="50.5" y1="12" x2="50.5" y2="16" transform="rotate(15.0 50.5 50.5)"/><line x1="50.5" y1="12" x2="50.5" y2="16" transform="rotate(22.5 50.5 50.5)"/><line x1="50.5" y1="12" x2="50.5" y2="19" transform="rotate(30.0 50.5 50.5)"/><line x1="50.5" y1="12" x2="50.5" y2="16" transform="rotate(37.5 50.5 50.5)"/><line x1="50.5" y1="12" x2="50.5" y2="16" transform="rotate(45.0 50.5 50.5)"/><line x1="50.5" y1="12" x2="50.5" y2="16" transform="rotate(52.5 50.5 50.5)"/><line x1="50.5" y1="12" x2="50.5" y2="19" transform="rotate(60.0 50.5 50.5)"/><line x1="50.5" y1="12" x2="50.5" y2="16" transform="rotate(67.5 50.5 50.5)"/><line x1="50.5" y1="12" x2="50.5" y2="16" transform="rotate(75.0 50.5 50.5)"/><line x1="50.5" y1="12" x2="50.5" y2="16" transform="rotate(82.5 50.5 50.5)"/><line x1="50.5" y1="12" x2="50.5" y2="19" transform="rotate(90.0 50.5 50.5)"/><line x1="50.5" y1="12" x2="50.5" y2="16" transform="rotate(97.5 50.5 50.5)"/><line x1="50.5" y1="12" x2="50.5" y2="16" transform="rotate(105.0 50.5 50.5)"/><line x1="50.5" y1="12" x2="50.5" y2="16" transform="rotate(112.5 50.5 50.5)"/><line x1="50.5" y1="12" x2="50.5" y2="19" transform="rotate(120.0 50.5 50.5)"/><line x1="50.5" y1="12" x2="50.5" y2="16" transform="rotate(127.5 50.5 50.5)"/><line x1="50.5" y1="12" x2="50.5" y2="16" transform="rotate(135.0 50.5 50.5)"/><line x1="50.5" y1="12" x2="50.5" y2="16" transform="rotate(142.5 50.5 50.5)"/><line x1="50.5" y1="12" x2="50.5" y2="19" transform="rotate(150.0 50.5 50.5)"/><line x1="50.5" y1="12" x2="50.5" y2="16" transform="rotate(157.5 50.5 50.5)"/><line x1="50.5" y1="12" x2="50.5" y2="16" transform="rotate(165.0 50.5 50.5)"/><line x1="50.5" y1="12" x2="50.5" y2="16" transform="rotate(172.5 50.5 50.5)"/><line x1="50.5" y1="12" x2="50.5" y2="19" transform="rotate(180.0 50.5 50.5)"/><line x1="50.5" y1="12" x2="50.5" y2="16" transform="rotate(187.5 50.5 50.5)"/><line x1="50.5" y1="12" x2="50.5" y2="16" transform="rotate(195.0 50.5 50.5)"/><line x1="50.5" y1="12" x2="50.5" y2="16" transform="rotate(202.5 50.5 50.5)"/><line x1="50.5" y1="12" x2="50.5" y2="19" transform="rotate(210.0 50.5 50.5)"/><line x1="50.5" y1="12" x2="50.5" y2="16" transform="rotate(217.5 50.5 50.5)"/><line x1="50.5" y1="12" x2="50.5" y2="16" transform="rotate(225.0 50.5 50.5)"/><line x1="50.5" y1="12" x2="50.5" y2="16" transform="rotate(232.5 50.5 50.5)"/><line x1="50.5" y1="12" x2="50.5" y2="19" transform="rotate(240.0 50.5 50.5)"/><line x1="50.5" y1="12" x2="50.5" y2="16" transform="rotate(247.5 50.5 50.5)"/><line x1="50.5" y1="12" x2="50.5" y2="16" transform="rotate(255.0 50.5 50.5)"/><line x1="50.5" y1="12" x2="50.5" y2="16" transform="rotate(262.5 50.5 50.5)"/><line x1="50.5" y1="12" x2="50.5" y2="19" transform="rotate(270.0 50.5 50.5)"/><line x1="50.5" y1="12" x2="50.5" y2="16" transform="rotate(277.5 50.5 50.5)"/><line x1="50.5" y1="12" x2="50.5" y2="16" transform="rotate(285.0 50.5 50.5)"/><line x1="50.5" y1="12" x2="50.5" y2="16" transform="rotate(292.5 50.5 50.5)"/><line x1="50.5" y1="12" x2="50.5" y2="19" transform="rotate(300.0 50.5 50.5)"/><line x1="50.5" y1="12" x2="50.5" y2="16" transform="rotate(307.5 50.5 50.5)"/><line x1="50.5" y1="12" x2="50.5" y2="16" transform="rotate(315.0 50.5 50.5)"/><line x1="50.5" y1="12" x2="50.5" y2="16" transform="rotate(322.5 50.5 50.5)"/><line x1="50.5" y1="12" x2="50.5" y2="19" transform="rotate(330.0 50.5 50.5)"/><line x1="50.5" y1="12" x2="50.5" y2="16" transform="rotate(337.5 50.5 50.5)"/><line x1="50.5" y1="12" x2="50.5" y2="16" transform="rotate(345.0 50.5 50.5)"/><line x1="50.5" y1="12" x2="50.5" y2="16" transform="rotate(352.5 50.5 50.5)"/></g>
<path d="M81 20 L55.5 55.5 L45.5 45.5 Z" fill="#f2433a"/><path d="M20 81 L45.5 45.5 L55.5 55.5 Z" fill="#f3f3f3"/></svg><svg style="position:absolute;left:291px;top:21px" width="101" height="101" viewBox="0 0 101 101" ><defs><linearGradient id="mb" x1="0" y1="0" x2="0" y2="1"><stop offset="0" stop-color="#1e6ff0"/><stop offset="1" stop-color="#26c4fa"/></linearGradient><linearGradient id="me" x1="0" y1="0" x2="0" y2="1"><stop offset="0" stop-color="#fafafa"/><stop offset="1" stop-color="#dedee2"/></linearGradient></defs>
<rect width="101" height="101" rx="23" fill="url(#mb)"/>
<rect x="14" y="27" width="72" height="47" rx="3.5" fill="url(#me)" stroke="#c9c9cf" stroke-width="0.8"/>
<path d="M15 29 L50 57 Q50.5 58 51 57 L86 29" stroke="#c3c3c8" stroke-width="1.6" fill="none"/><path d="M15 72 L40 50 M86 72 L61 50" stroke="#cdcdd2" stroke-width="1.2"/></svg><svg style="position:absolute;left:425px;top:21px" width="101" height="101" viewBox="0 0 101 101" ><rect width="101" height="101" rx="23" fill="#f8f8f8"/><path d="M23 0 H78 Q101 0 101 23 V29 H0 V23 Q0 0 23 0Z" fill="#ef5350"/>
<text x="50.5" y="22" text-anchor="middle" font-family="Liberation Sans" font-weight="bold" font-size="17.5" fill="#fff">ИЮЛЬ</text>
<text x="50.5" y="87" text-anchor="middle" font-family="Liberation Sans" font-size="56" fill="#262626" transform="translate(50.5 0) scale(1.05 1) translate(-50.5 0)">23</text></svg><svg style="position:absolute;left:559px;top:21px" width="101" height="101" viewBox="0 0 101 101" ><defs><linearGradient id="ny" x1="0" y1="0" x2="0" y2="1"><stop offset="0" stop-color="#fde37a"/><stop offset="1" stop-color="#fcc52a"/></linearGradient><linearGradient id="nw" x1="0" y1="0" x2="0" y2="1"><stop offset="0" stop-color="#f6f5f1"/><stop offset="1" stop-color="#e7e4dc"/></linearGradient></defs>
<rect width="101" height="101" rx="23" fill="url(#nw)"/><path d="M23 0 H78 Q101 0 101 23 V26 H0 V23 Q0 0 23 0Z" fill="url(#ny)"/>
<path d="M0 30 H101" stroke="#b9b6ae" stroke-width="1.4" stroke-dasharray="1.6 2.4"/><path d="M0 51 H101 M0 76 H101" stroke="#cfccc4" stroke-width="1.3"/></svg><svg style="position:absolute;left:693px;top:21px" width="101" height="101" viewBox="0 0 101 101" ><rect width="101" height="101" rx="23" fill="#fbfbfb"/>
<g stroke-width="1.6" fill="#fff"><circle cx="19.5" cy="25" r="7.5" stroke="#1f76f2"/><circle cx="19.5" cy="50" r="7.5" stroke="#e8342e"/><circle cx="19.5" cy="75.5" r="7.5" stroke="#ef8f1a"/></g>
<circle cx="19.5" cy="25" r="5.2" fill="#1f76f2"/><circle cx="19.5" cy="50" r="5.2" fill="#e8342e"/><circle cx="19.5" cy="75.5" r="5.2" fill="#ef8f1a"/>
<path d="M38 25 H90 M38 50 H90 M38 75.5 H90" stroke="#a8a8ac" stroke-width="1.5"/></svg><svg style="position:absolute;left:827px;top:21px" width="101" height="101" viewBox="0 0 101 101" ><rect width="101" height="101" rx="23" fill="#fcfcfc"/><rect x="38.5" y="5.5" width="24" height="45" rx="12" fill="#f59a2a" opacity="0.82" transform="rotate(0 50.5 50.5)"/><rect x="38.5" y="5.5" width="24" height="45" rx="12" fill="#f6d32c" opacity="0.82" transform="rotate(45 50.5 50.5)"/><rect x="38.5" y="5.5" width="24" height="45" rx="12" fill="#9ccc3a" opacity="0.82" transform="rotate(90 50.5 50.5)"/><rect x="38.5" y="5.5" width="24" height="45" rx="12" fill="#3fb06a" opacity="0.82" transform="rotate(135 50.5 50.5)"/><rect x="38.5" y="5.5" width="24" height="45" rx="12" fill="#4d9ee4" opacity="0.82" transform="rotate(180 50.5 50.5)"/><rect x="38.5" y="5.5" width="24" height="45" rx="12" fill="#6e63c8" opacity="0.82" transform="rotate(225 50.5 50.5)"/><rect x="38.5" y="5.5" width="24" height="45" rx="12" fill="#c06cb8" opacity="0.82" transform="rotate(270 50.5 50.5)"/><rect x="38.5" y="5.5" width="24" height="45" rx="12" fill="#e8453c" opacity="0.82" transform="rotate(315 50.5 50.5)"/><circle cx="50.5" cy="50.5" r="2" fill="#fff"/></svg><svg style="position:absolute;left:961px;top:21px" width="101" height="101" viewBox="0 0 101 101" ><defs><linearGradient id="gm" x1="0" y1="0" x2="0" y2="1"><stop offset="0" stop-color="#68e86c"/><stop offset="1" stop-color="#20c03a"/></linearGradient><radialGradient id="gb" cx="45%" cy="35%" r="70%"><stop offset="0" stop-color="#ffffff"/><stop offset="1" stop-color="#dde8dd"/></radialGradient></defs>
<rect width="101" height="101" rx="23" fill="url(#gm)"/><ellipse cx="50.5" cy="47" rx="37" ry="30" fill="url(#gb)"/><path d="M24 65 Q22 78 16 84 Q30 82 40 73Z" fill="#eef4ee"/></svg><svg style="position:absolute;left:1095px;top:7px" width="101" height="115" viewBox="0 0 101 115" ><defs><linearGradient id="fcd" x1="0" y1="0" x2="0" y2="1"><stop offset="0" stop-color="#3a3d46"/><stop offset="1" stop-color="#1e2027"/></linearGradient></defs>
<path d="M3 18 Q2 12 8 11 L88 1 Q98 0 99 10 L100 14 L5 30 Z" fill="#2c2f38"/>
<path d="M15 14 L30 12 L20 28 L6 30Z M45 10 L60 8 L50 24 L36 26Z M75 6 L90 4 L80 20 L66 22Z" fill="#dde0e8"/>
<rect x="1" y="31" width="99" height="84" rx="14" fill="url(#fcd)"/>
<path d="M1 31 H100 V50 H1Z" fill="#2c2f38"/>
<path d="M14 31 L30 31 L20 49 L4 49Z M44 31 L60 31 L50 49 L34 49Z M74 31 L90 31 L80 49 L64 49Z" fill="#dde0e8"/>
<foreignObject x="7" y="53" width="87" height="56"><div style="width:87px;height:56px;border-radius:2px 2px 12px 12px;background:conic-gradient(from 0deg at 50% 35%,#ffb030 0deg,#ff4a3a 45deg,#f060d0 95deg,#7090ff 140deg,#60f8f0 180deg,#60f060 225deg,#d8f850 270deg,#fff050 315deg,#ffb030 360deg)"></div></foreignObject></svg><svg style="position:absolute;left:1229px;top:21px" width="101" height="101" viewBox="0 0 101 101" ><defs><linearGradient id="mu" x1="0" y1="0" x2="0" y2="1"><stop offset="0" stop-color="#fb5c74"/><stop offset="1" stop-color="#fa233b"/></linearGradient></defs>
<rect width="101" height="101" rx="23" fill="url(#mu)"/>
<path d="M36 34 L72 26 V73" stroke="#fff" stroke-width="6.5" fill="none" stroke-linejoin="round"/><path d="M36 30 V79" stroke="#fff" stroke-width="6.5"/>
<path d="M36 30 L72 22 V35 L36 43Z" fill="#fff"/>
<ellipse cx="27.5" cy="79" rx="10.5" ry="8.5" fill="#fff"/><ellipse cx="63.5" cy="73" rx="10.5" ry="8.5" fill="#fff"/></svg><svg style="position:absolute;left:1363px;top:17px" width="109" height="109" viewBox="0 0 109 109" ><defs><linearGradient id="tor" x1="0" y1="0" x2="0" y2="1"><stop offset="0" stop-color="#9a2ed8"/><stop offset="1" stop-color="#561a86"/></linearGradient></defs>
<circle cx="54.5" cy="54.5" r="54" fill="url(#tor)"/>
<g fill="none" stroke="#efdcff"><path d="M54.5 12 A42.5 42.5 0 0 1 54.5 97" stroke-width="5.5"/><path d="M54.5 25 A29.5 29.5 0 0 1 54.5 84" stroke-width="5.5"/></g>
<path d="M54.5 41 A13.5 13.5 0 0 1 54.5 68Z" fill="#efdcff"/><path d="M54.5 5 V104" stroke="#efdcff" stroke-width="2.2"/></svg><svg style="position:absolute;left:1468px;top:0px" width="140" height="155" viewBox="0 0 806 893" ><path d="M110 75 L310 183 M630 365 L710 400 L110 755 M110 75 V755" stroke="#0d0d0d" stroke-width="16" fill="none" stroke-linejoin="miter"/>
<path d="M180 400 C250 360 300 260 330 185 C360 115 400 88 445 85 L470 85 C430 120 385 190 377 250 C370 310 405 350 500 352 L495 400 Z" fill="#8e0d2c"/>
<path d="M470 85 L800 85 C760 92 725 112 705 150 L615 330 C595 375 565 400 530 400 C575 360 600 290 603 225 C605 160 570 130 460 130 Z" fill="#8e0d2c"/></svg><svg style="position:absolute;left:1631.1377993752171px;top:20.82610204790012px" width="108" height="108" viewBox="0 0 108 108" ><defs><linearGradient id="pvs" x1="0" y1="0" x2="0" y2="1"><stop offset="0" stop-color="#8db4ea"/><stop offset="1" stop-color="#bcd3ef"/></linearGradient><linearGradient id="pvg" x1="0" y1="0" x2="0" y2="1"><stop offset="0" stop-color="#e8ecef" stop-opacity="0.9"/><stop offset="1" stop-color="#b9c2c8" stop-opacity="0.95"/></linearGradient></defs>
<rect x="0" y="1" width="100" height="101" rx="16" fill="#f4f4f4"/>
<rect x="8" y="9" width="84" height="90" rx="10" fill="url(#pvs)"/>
<path d="M8 56 H92 V99 H8Z" fill="#1d3c88"/><path d="M8 66 Q30 62 50 70 T92 68 V99 H8Z" fill="#dfeff4"/><path d="M8 74 Q20 70 35 76 L30 80 Q18 78 8 80Z" fill="#3b3630"/><path d="M8 90 Q30 84 55 92 V99 H18 Q8 99 8 92Z" fill="#6b5b4a"/>
<path d="M54 68 H96 L104 103 Q80 110 46 103Z" fill="url(#pvg)"/>
<ellipse cx="75" cy="56" rx="23" ry="10" fill="#222"/><rect x="52" y="56" width="46" height="13" fill="#1a1a1a"/><ellipse cx="75" cy="69" rx="23" ry="5" fill="#111"/></svg><svg style="position:absolute;left:1745.6813606386672px;top:0px" width="140" height="155" viewBox="1600 0 806 893" ><defs><linearGradient id="kg" x1="0" y1="0" x2="0" y2="1"><stop offset="0" stop-color="#d6a423"/><stop offset="1" stop-color="#9c7416"/></linearGradient><linearGradient id="kw" x1="0" y1="0" x2="1" y2="1"><stop offset="0" stop-color="#ffffff"/><stop offset="1" stop-color="#e4e4e4"/></linearGradient></defs>
<path d="M1690 55 H2040 L2360 300 V735 Q2360 775 2320 775 H1680 Q1640 775 1640 735 V95 Q1640 55 1690 55Z" fill="url(#kg)"/>
<path d="M2150 55 H2330 Q2360 55 2360 85 V230 Z" fill="#d6a423" stroke="#d6a423" stroke-width="20" stroke-linejoin="round"/>
<path d="M1695 95 H2030 L2305 330 V730 H1695Z" fill="#d8d8d8"/><path d="M1728 128 H2015 L2275 345 V700 H1728Z" fill="url(#kw)"/>
<g stroke="#c2470f" stroke-width="24" fill="none"><path d="M1920 130 V235 M1920 365 V410 H2085 M1740 505 H1860 M1860 435 V575 M1860 478 L1925 415 M1860 530 L1925 592 V650 M1885 650 H1965 M2005 685 V522 H2280 M2040 575 H2115 M2165 575 H2275 M2040 657 H2115 M2205 657 H2275"/>
<rect x="1882" y="237" width="78" height="126"/><path d="M2087 377 H2200 L2272 415 L2200 453 H2087Z"/></g></svg><div style="position:absolute;left:1912px;top:19px;width:2px;height:116px;background:#2e4656"></div><svg style="position:absolute;left:1958px;top:10px" width="100" height="125" viewBox="0 0 100 125" ><defs><linearGradient id="hd" x1="0" y1="0" x2="1" y2="1"><stop offset="0" stop-color="#ffffff"/><stop offset="1" stop-color="#e2e2e2"/></linearGradient></defs>
<rect x="21" y="2" width="60" height="70" rx="2" fill="#f2f2f2"/><rect x="20" y="2" width="6" height="20" fill="#222"/>
<rect x="25" y="22" width="73" height="68" rx="2" fill="#f0f0f0"/><rect x="3" y="22" width="7" height="67" rx="2" fill="#1c1c1c"/>
<path d="M11 14 H60 L90 44 V116 Q90 119 87 119 H14 Q11 119 11 116Z" fill="url(#hd)"/><path d="M60 14 V40 Q60 44 64 44 H90Z" fill="#e8e8e8" stroke="#cfcfcf" stroke-width="0.8"/>
<path d="M12 40 H22" stroke="#7a86e8" stroke-width="0.9"/><path d="M14 43 H31" stroke="#7a86e8" stroke-width="0.9"/><path d="M16 46 H26" stroke="#7a86e8" stroke-width="0.9"/><path d="M12 49 H29" stroke="#7a86e8" stroke-width="0.9"/><path d="M14 52 H24" stroke="#7a86e8" stroke-width="0.9"/><path d="M16 55 H33" stroke="#7a86e8" stroke-width="0.9"/><path d="M12 58 H22" stroke="#7a86e8" stroke-width="0.9"/><path d="M14 61 H31" stroke="#7a86e8" stroke-width="0.9"/><path d="M16 64 H26" stroke="#7a86e8" stroke-width="0.9"/><path d="M12 67 H29" stroke="#7a86e8" stroke-width="0.9"/><path d="M14 70 H24" stroke="#7a86e8" stroke-width="0.9"/><path d="M16 73 H33" stroke="#7a86e8" stroke-width="0.9"/><path d="M12 76 H22" stroke="#7a86e8" stroke-width="0.9"/><path d="M14 79 H31" stroke="#7a86e8" stroke-width="0.9"/><path d="M16 82 H26" stroke="#7a86e8" stroke-width="0.9"/><path d="M12 85 H29" stroke="#7a86e8" stroke-width="0.9"/><path d="M14 88 H24" stroke="#7a86e8" stroke-width="0.9"/><path d="M16 91 H33" stroke="#7a86e8" stroke-width="0.9"/><path d="M12 94 H22" stroke="#7a86e8" stroke-width="0.9"/><path d="M14 97 H31" stroke="#7a86e8" stroke-width="0.9"/><text x="51" y="111" text-anchor="middle" font-family="Liberation Sans" font-size="16" fill="#5a5a5a">HTML</text></svg><svg style="position:absolute;left:2096px;top:10px" width="95" height="125" viewBox="0 0 95 125" ><defs><linearGradient id="tr" x1="0" y1="0" x2="1" y2="0"><stop offset="0" stop-color="#dfe2e4"/><stop offset="0.5" stop-color="#f3f4f5"/><stop offset="1" stop-color="#d6dadd"/></linearGradient></defs>
<path d="M3 27 L14 110 Q17 118 47 118 Q77 118 80 110 L91 27Z" fill="url(#tr)" opacity="0.93"/>
<ellipse cx="47" cy="27" rx="44" ry="9" fill="#c9ced2"/><ellipse cx="47" cy="27" rx="40" ry="7" fill="#aeb5ba"/>
<path d="M12 24 L22 10 L36 14 L44 4 L58 12 L70 7 L84 20 L78 30 L20 32Z" fill="#e6e6e6"/><path d="M58 14 L72 10 L80 24 L62 30Z" fill="#3a6ab8"/><path d="M30 20 L42 16 L46 28 L34 30Z" fill="#3cc8d8"/><path d="M48 20 L56 18 L58 30 L50 30Z" fill="#e05a30"/></svg><div class="dot" style="left:69px"></div><div class="dot" style="left:203px"></div><div class="dot" style="left:1541px"></div><div class="dot" style="left:1676px"></div><div class="dot" style="left:1809px"></div></div>
</body></html>
